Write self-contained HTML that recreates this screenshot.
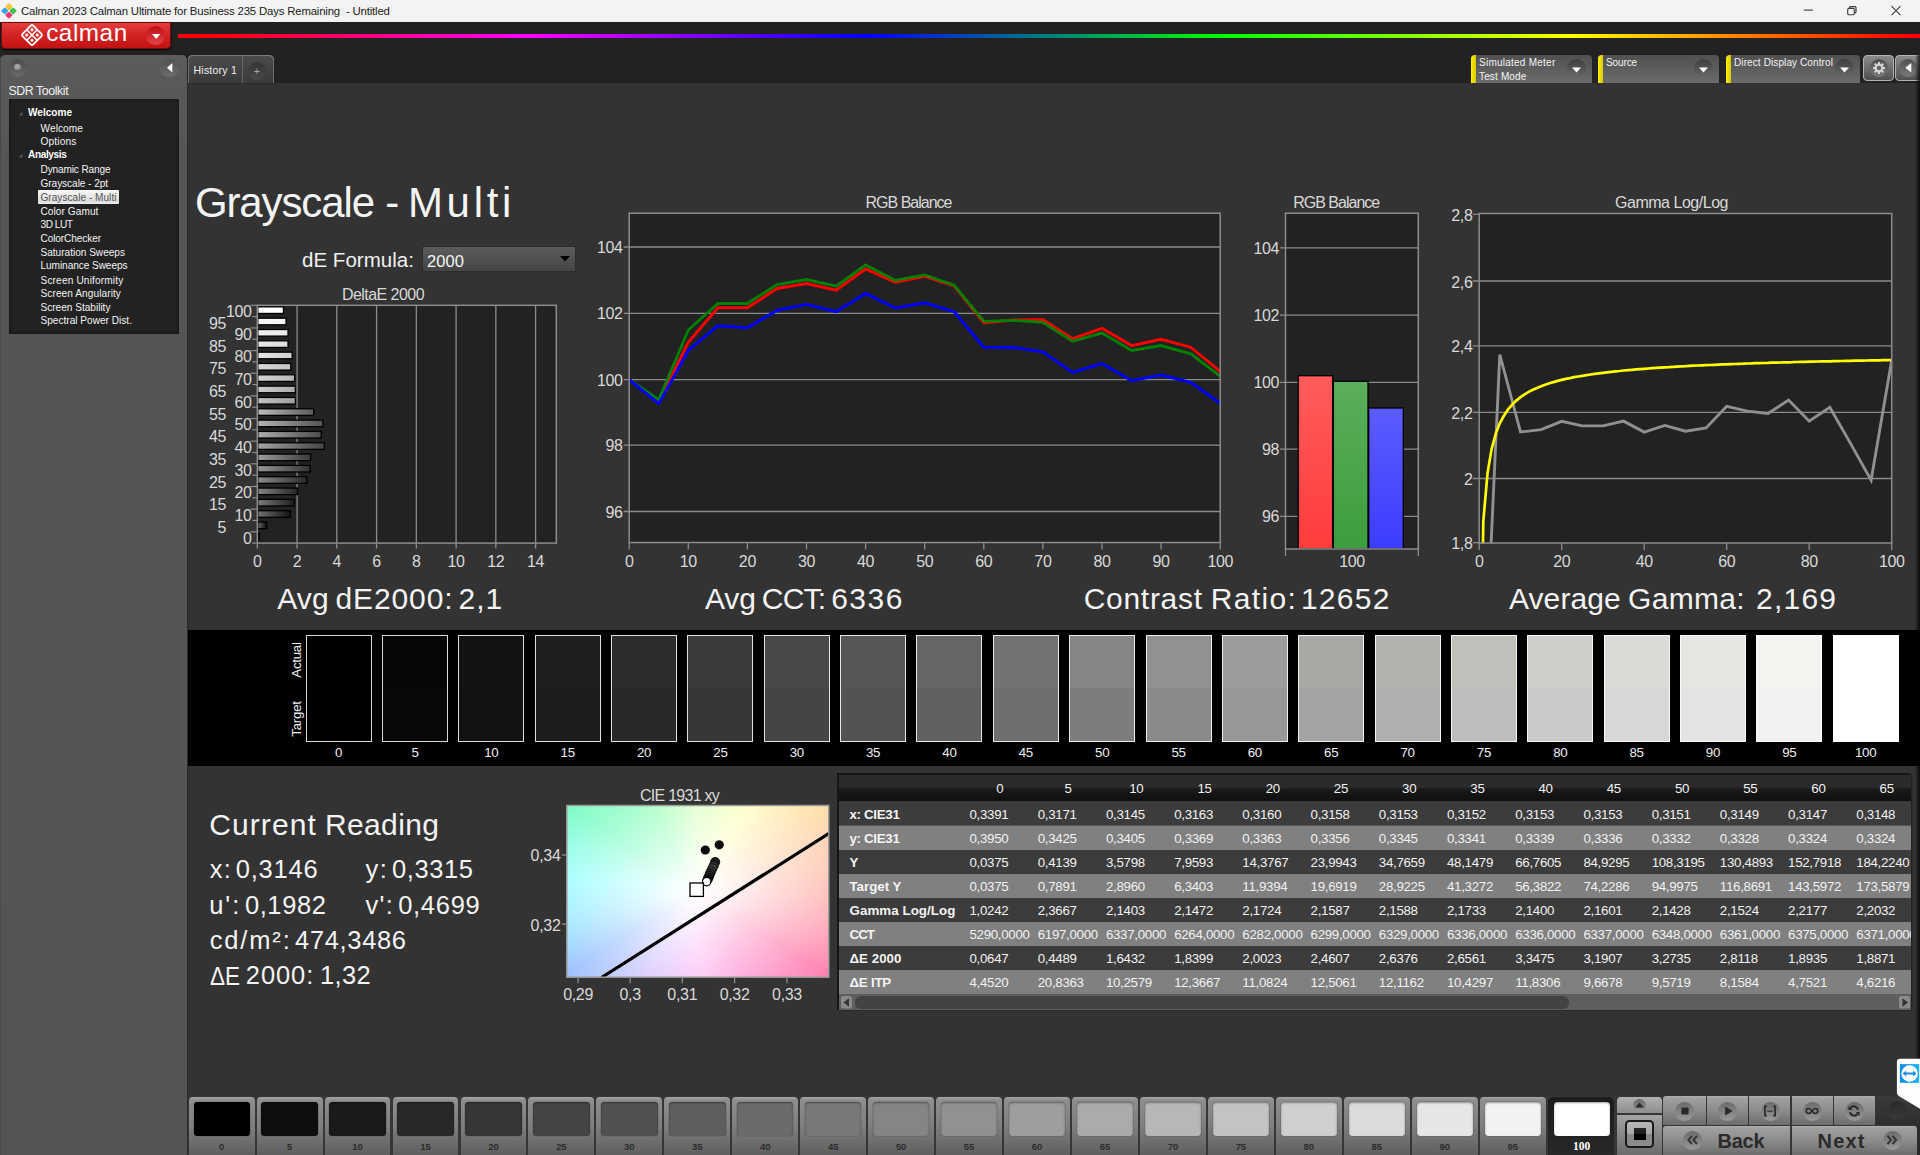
<!DOCTYPE html>
<html lang="en"><head><meta charset="utf-8"><title>Calman 2023 - Grayscale Multi</title>
<style>
html,body{margin:0;padding:0;background:#333;font-family:"Liberation Sans",sans-serif;}
body{width:1920px;height:1155px;position:relative;overflow:hidden;font-family:"Liberation Sans",sans-serif;}
#app{position:absolute;left:0;top:0;width:1920px;height:1155px;overflow:hidden;}
#app div,#app span.t,#app svg.abs,#app table{position:absolute;}
span.t{white-space:pre;display:block;}
svg{display:block;overflow:visible}
</style></head>
<body><div id="app">
<!-- part1 -->
<div id="titlebar" style="left:0;top:0;width:1920px;height:22px;background:#f3f3f3"></div>
<svg class="abs" style="left:1px;top:3px" width="16" height="16" viewBox="0 0 16 16"><rect x="5.2" y="1" width="5.4" height="5.4" rx="1.2" transform="rotate(45 7.9 3.7)" fill="#fbc531"/><rect x="1.1" y="5.2" width="5.4" height="5.4" rx="1.2" transform="rotate(45 3.8 7.9)" fill="#34a4e4"/><rect x="9.4" y="5.2" width="5.4" height="5.4" rx="1.2" transform="rotate(45 12.1 7.9)" fill="#3fc04a"/><rect x="5.2" y="9.4" width="5.4" height="5.4" rx="1.2" transform="rotate(45 7.9 12.1)" fill="#f0356c"/></svg>
<span class="t" style="left:21.00px;top:4.30px;font-size:11.4px;line-height:14px;letter-spacing:-0.184px;color:#1a1a1a;white-space:pre;">Calman 2023 Calman Ultimate for Business 235 Days Remaining  - Untitled</span>
<svg class="abs" style="left:1790px;top:0" width="130" height="22" viewBox="0 0 130 22" fill="none" stroke="#3c3c3c" stroke-width="1.100"><path d="M13.800 10.100h9.200" stroke="#555" stroke-width="1.300"/><rect x="57.700" y="8.400" width="6.600" height="6.300" rx="1.300"/><path d="M59.400 8.300v-0.400a1.300 1.300 0 0 1 1.300-1.300h4a1.300 1.300 0 0 1 1.300 1.300v3.800a1.300 1.300 0 0 1-1.300 1.300h-0.300" stroke-width="1.200"/><path d="M101.500 6.200l9 9m0-9l-9 9" stroke-width="1.100"/></svg>
<div style="left:0;top:22px;width:1920px;height:61px;background:#222"></div>
<div style="left:178px;top:34px;width:1742px;height:4px;background:linear-gradient(90deg,#ff0000 0%,#ff0000 1.500%,#ff00ff 20%,#0000ff 39.500%,#00ff00 60%,#ffff00 80%,#ff0000 99.500%)"></div>
<div style="left:1px;top:22px;width:170px;height:27px;border-radius:0 0 5px 5px;background:linear-gradient(#e84040,#d42424 45%,#c01010);box-shadow:0 0 0 1px #6a1010 inset,0 1px 2px #000"></div>
<svg class="abs" style="left:20px;top:23px" width="24" height="25" viewBox="0 0 24 25"><g transform="translate(12 12.050) rotate(45)" fill="none" stroke="#fff"><rect x="-7.500" y="-7.500" width="15" height="15" rx="1.700" stroke-width="1.800"/><path d="M0 -7.500v15M-7.500 0h15" stroke-width="1.600"/><g fill="#fff" stroke="none"><rect x="-5.100" y="-5.100" width="2.700" height="2.700"/><rect x="2.400" y="-5.100" width="2.700" height="2.700"/><rect x="-5.100" y="2.400" width="2.700" height="2.700"/><rect x="2.400" y="2.400" width="2.700" height="2.700"/></g></g></svg>
<span class="t" style="left:46.20px;top:18.40px;font-size:24.3px;line-height:29px;letter-spacing:0.528px;color:#fff;font-weight:normal;">calman</span>
<div style="left:146.200px;top:25.700px;width:19px;height:19px;border-radius:50%;background:linear-gradient(#bc0c14,#e24646)"></div>
<svg class="abs" style="left:151.500px;top:33.700px" width="9" height="6"><path d="M0 0h8.400l-4.200 4.900z" fill="#fff"/></svg>
<div style="left:0;top:54.800px;width:187px;height:1101px;border-radius:5px 5px 0 0;background:linear-gradient(#5c5c5c 0,#585858 40px,#555 120px,#545454);box-shadow:inset 1px 0 #4a4a4a"></div>
<div style="left:187px;top:83px;width:1.400px;height:1072px;background:#2a2a2a"></div>
<div style="left:8.700px;top:58.800px;width:18px;height:18px;border-radius:50%;background:linear-gradient(#4c4c4c,#686868)"></div>
<div style="left:13.800px;top:63.600px;width:6.800px;height:6.800px;border-radius:50%;background:radial-gradient(circle at 45% 35%,#b0b0b0,#7c7c7c)"></div>
<div style="left:160.300px;top:58.500px;width:18.600px;height:18.600px;border-radius:50%;background:linear-gradient(#525252,#6c6c6c)"></div>
<svg class="abs" style="left:166.600px;top:62.500px" width="6" height="10"><path d="M5.400 0v9.600l-5.400-4.800z" fill="#fff"/></svg>
<span class="t" style="left:8.50px;top:83.70px;font-size:12.3px;line-height:15px;letter-spacing:-0.393px;color:#f2f2f2;">SDR Toolkit</span>
<div style="left:9px;top:99px;width:170px;height:235px;background:#222;box-shadow:inset 0 0 3px 1px #171717"></div>
<svg class="abs" style="left:18px;top:111.2px" width="5" height="5"><path d="M4.500 0.500v4h-4z" fill="#555"/></svg>
<span class="t" style="left:28.00px;top:107.20px;font-size:10.1px;line-height:12px;letter-spacing:-0.022px;font-weight:bold;color:#fff;">Welcome</span>
<span class="t" style="left:40.50px;top:122.80px;font-size:10.1px;line-height:12px;letter-spacing:0.085px;color:#f4f4f4;">Welcome</span>
<span class="t" style="left:40.50px;top:135.60px;font-size:10.1px;line-height:12px;letter-spacing:0.171px;color:#f4f4f4;">Options</span>
<svg class="abs" style="left:18px;top:153.4px" width="5" height="5"><path d="M4.500 0.500v4h-4z" fill="#555"/></svg>
<span class="t" style="left:28.00px;top:149.40px;font-size:10.1px;line-height:12px;letter-spacing:-0.380px;font-weight:bold;color:#fff;">Analysis</span>
<span class="t" style="left:40.50px;top:164.30px;font-size:10.1px;line-height:12px;letter-spacing:-0.142px;color:#f4f4f4;">Dynamic Range</span>
<span class="t" style="left:40.50px;top:178.30px;font-size:10.1px;line-height:12px;letter-spacing:-0.065px;color:#f4f4f4;">Grayscale - 2pt</span>
<div style="left:38.100px;top:190.3px;width:80.700px;height:13.700px;border-radius:1px;background:linear-gradient(#fff 0,#f2f2f2 18%,#dcdcdc 80%,#efefef 100%)"></div>
<span class="t" style="left:40.50px;top:191.80px;font-size:10.1px;line-height:12px;letter-spacing:0.014px;color:#555;">Grayscale - Multi</span>
<span class="t" style="left:40.50px;top:205.50px;font-size:10.1px;line-height:12px;letter-spacing:0.068px;color:#f4f4f4;">Color Gamut</span>
<span class="t" style="left:40.50px;top:219.30px;font-size:10.1px;line-height:12px;letter-spacing:-0.466px;color:#f4f4f4;">3D LUT</span>
<span class="t" style="left:40.50px;top:233.00px;font-size:10.1px;line-height:12px;letter-spacing:-0.103px;color:#f4f4f4;">ColorChecker</span>
<span class="t" style="left:40.50px;top:246.60px;font-size:10.1px;line-height:12px;letter-spacing:-0.016px;color:#f4f4f4;">Saturation Sweeps</span>
<span class="t" style="left:40.50px;top:260.30px;font-size:10.1px;line-height:12px;letter-spacing:-0.071px;color:#f4f4f4;">Luminance Sweeps</span>
<span class="t" style="left:40.50px;top:274.80px;font-size:10.1px;line-height:12px;letter-spacing:0.161px;color:#f4f4f4;">Screen Uniformity</span>
<span class="t" style="left:40.50px;top:288.30px;font-size:10.1px;line-height:12px;letter-spacing:0.079px;color:#f4f4f4;">Screen Angularity</span>
<span class="t" style="left:40.50px;top:301.50px;font-size:10.1px;line-height:12px;letter-spacing:-0.011px;color:#f4f4f4;">Screen Stability</span>
<span class="t" style="left:40.50px;top:315.30px;font-size:10.1px;line-height:12px;color:#f4f4f4;">Spectral Power Dist.</span>
<div style="left:187.500px;top:54.500px;width:86.500px;height:28.500px;border-radius:5px 5px 0 0;background:linear-gradient(#4c4c4c,#3a3a3a);box-shadow:inset 0 1px 0 0 #7a7a7a,inset 1px 0 0 0 #6c6c6c,inset -1px 0 0 0 #6c6c6c"></div>
<div style="left:241.800px;top:55.500px;width:1.200px;height:27px;background:#666"></div>
<span class="t" style="left:193.50px;top:64.00px;font-size:10.5px;line-height:13px;letter-spacing:0.231px;color:#f0f0f0;">History 1</span>
<div style="left:247.700px;top:61.600px;width:18px;height:18px;border-radius:50%;background:linear-gradient(#343434,#4a4a4a)"></div>
<span class="t" style="left:253.73px;top:65.30px;font-size:10.5px;line-height:13px;color:#a8a8a8;">+</span>
<div style="left:188px;top:83px;width:1732px;height:1072px;background:#333"></div>
<div style="left:187.500px;top:82.700px;width:86.500px;height:1.100px;background:#2b2b2b"></div>
<div style="left:1471px;top:55px;width:121px;height:28px;border-radius:4px 4px 0 0;background:linear-gradient(#505050,#6c6c6c)"></div>
<div style="left:1471px;top:55px;width:5px;height:28px;border-radius:4px 0 0 0;background:linear-gradient(90deg,#fff000,#d8c800)"></div>
<div style="left:1567px;top:59px;width:19px;height:19px;border-radius:50%;background:linear-gradient(#3e3e3e,#6a6a6a)"></div>
<svg class="abs" style="left:1572px;top:67px" width="9" height="6"><path d="M0 0.500h9l-4.500 5z" fill="#fff"/></svg>
<span class="t" style="left:1479.00px;top:56.70px;font-size:10px;line-height:12px;letter-spacing:0.246px;color:#f4f4f4;">Simulated Meter</span>
<span class="t" style="left:1479.00px;top:71.00px;font-size:10px;line-height:12px;letter-spacing:0.152px;color:#f4f4f4;">Test Mode</span>
<div style="left:1598px;top:55px;width:121px;height:28px;border-radius:4px 4px 0 0;background:linear-gradient(#505050,#6c6c6c)"></div>
<div style="left:1598px;top:55px;width:5px;height:28px;border-radius:4px 0 0 0;background:linear-gradient(90deg,#fff000,#d8c800)"></div>
<div style="left:1694px;top:59px;width:19px;height:19px;border-radius:50%;background:linear-gradient(#3e3e3e,#6a6a6a)"></div>
<svg class="abs" style="left:1699px;top:67px" width="9" height="6"><path d="M0 0.500h9l-4.500 5z" fill="#fff"/></svg>
<span class="t" style="left:1606.00px;top:56.70px;font-size:10px;line-height:12px;letter-spacing:-0.114px;color:#f4f4f4;">Source</span>
<div style="left:1726px;top:55px;width:134px;height:28px;border-radius:4px 4px 0 0;background:linear-gradient(#505050,#6c6c6c)"></div>
<div style="left:1726px;top:55px;width:5px;height:28px;border-radius:4px 0 0 0;background:linear-gradient(90deg,#fff000,#d8c800)"></div>
<div style="left:1835px;top:59px;width:19px;height:19px;border-radius:50%;background:linear-gradient(#3e3e3e,#6a6a6a)"></div>
<svg class="abs" style="left:1840px;top:67px" width="9" height="6"><path d="M0 0.500h9l-4.500 5z" fill="#fff"/></svg>
<span class="t" style="left:1734.00px;top:56.70px;font-size:10px;line-height:12px;letter-spacing:0.105px;color:#f4f4f4;">Direct Display Control</span>
<div style="left:1863px;top:54.500px;width:31.300px;height:26.400px;box-sizing:border-box;border:1px solid #b4b4b4;border-radius:4px;background:linear-gradient(#8a8a8a,#505050)"></div>
<div style="left:1869.600px;top:58.600px;width:18px;height:18px;border-radius:50%;background:linear-gradient(#505050,#7a7a7a)"></div>
<svg class="abs" style="left:1871.600px;top:60.600px" width="14" height="14" viewBox="-7 -7 14 14"><g fill="#d8d8d8"><path d="M-1.250 -4h2.500l-0.350 -2h-1.800z" transform="rotate(0)"/><path d="M-1.250 -4h2.500l-0.350 -2h-1.800z" transform="rotate(45)"/><path d="M-1.250 -4h2.500l-0.350 -2h-1.800z" transform="rotate(90)"/><path d="M-1.250 -4h2.500l-0.350 -2h-1.800z" transform="rotate(135)"/><path d="M-1.250 -4h2.500l-0.350 -2h-1.800z" transform="rotate(180)"/><path d="M-1.250 -4h2.500l-0.350 -2h-1.800z" transform="rotate(225)"/><path d="M-1.250 -4h2.500l-0.350 -2h-1.800z" transform="rotate(270)"/><path d="M-1.250 -4h2.500l-0.350 -2h-1.800z" transform="rotate(315)"/></g><circle r="3.300" fill="none" stroke="#d8d8d8" stroke-width="1.900"/></svg>
<div style="left:1894.900px;top:54.500px;width:31.300px;height:26.400px;box-sizing:border-box;border:1px solid #b4b4b4;border-radius:4px;background:linear-gradient(#8a8a8a,#505050)"></div>
<div style="left:1898.600px;top:58.600px;width:18px;height:18px;border-radius:50%;background:linear-gradient(#505050,#7a7a7a)"></div>
<svg class="abs" style="left:1904.500px;top:62.500px" width="7" height="10"><path d="M6.300 0v9.600l-6-4.800z" fill="#fff"/></svg>
<div style="left:1914.500px;top:55px;width:5.500px;height:1042px;background:linear-gradient(90deg,rgba(0,0,0,0),rgba(0,0,0,.45) 55%,rgba(0,0,0,.75))"></div>
<!-- part2 -->
<span class="t" style="left:194.90px;top:178.00px;font-size:42px;line-height:50px;letter-spacing:-1.115px;color:#f4f4f4;">Grayscale</span><span class="t" style="left:385.22px;top:178.00px;font-size:42px;line-height:50px;color:#f4f4f4;">-</span><span class="t" style="left:407.94px;top:178.00px;font-size:42px;line-height:50px;letter-spacing:3.690px;color:#f4f4f4;">Multi</span>
<span class="t" style="left:302.00px;top:246.50px;font-size:20.5px;line-height:25px;letter-spacing:0.033px;color:#f0f0f0;">dE Formula:</span>
<div style="left:422.400px;top:245.600px;width:153.600px;height:26px;background:linear-gradient(#5c5c5c,#444);box-shadow:inset 0 0 0 1px #2c2c2c"></div>
<span class="t" style="left:427.00px;top:251.00px;font-size:16.5px;line-height:20px;letter-spacing:0.074px;color:#f4f4f4;">2000</span>
<svg class="abs" style="left:560px;top:256px" width="10" height="6"><path d="M0 0h10l-5 5.500z" fill="#000"/></svg>
<span class="t" style="left:342.00px;top:285.00px;font-size:16px;line-height:19px;letter-spacing:-0.551px;color:#d9d9d9;">DeltaE 2000</span>
<svg class="abs" style="left:190px;top:285px" width="390" height="290" viewBox="190 285 390 290">
<defs>
<linearGradient id="db0" x1="0" x2="1" y1="0" y2="0"><stop offset="0" stop-color="rgb(97,97,97)"/><stop offset="1" stop-color="rgb(0,0,0)"/></linearGradient>
<linearGradient id="db1" x1="0" x2="1" y1="0" y2="0"><stop offset="0" stop-color="rgb(107,107,107)"/><stop offset="1" stop-color="rgb(10,10,10)"/></linearGradient>
<linearGradient id="db2" x1="0" x2="1" y1="0" y2="0"><stop offset="0" stop-color="rgb(116,116,116)"/><stop offset="1" stop-color="rgb(19,19,19)"/></linearGradient>
<linearGradient id="db3" x1="0" x2="1" y1="0" y2="0"><stop offset="0" stop-color="rgb(125,125,125)"/><stop offset="1" stop-color="rgb(28,28,28)"/></linearGradient>
<linearGradient id="db4" x1="0" x2="1" y1="0" y2="0"><stop offset="0" stop-color="rgb(133,133,133)"/><stop offset="1" stop-color="rgb(36,36,36)"/></linearGradient>
<linearGradient id="db5" x1="0" x2="1" y1="0" y2="0"><stop offset="0" stop-color="rgb(141,141,141)"/><stop offset="1" stop-color="rgb(44,44,44)"/></linearGradient>
<linearGradient id="db6" x1="0" x2="1" y1="0" y2="0"><stop offset="0" stop-color="rgb(149,149,149)"/><stop offset="1" stop-color="rgb(52,52,52)"/></linearGradient>
<linearGradient id="db7" x1="0" x2="1" y1="0" y2="0"><stop offset="0" stop-color="rgb(157,157,157)"/><stop offset="1" stop-color="rgb(60,60,60)"/></linearGradient>
<linearGradient id="db8" x1="0" x2="1" y1="0" y2="0"><stop offset="0" stop-color="rgb(165,165,165)"/><stop offset="1" stop-color="rgb(68,68,68)"/></linearGradient>
<linearGradient id="db9" x1="0" x2="1" y1="0" y2="0"><stop offset="0" stop-color="rgb(173,173,173)"/><stop offset="1" stop-color="rgb(76,76,76)"/></linearGradient>
<linearGradient id="db10" x1="0" x2="1" y1="0" y2="0"><stop offset="0" stop-color="rgb(181,181,181)"/><stop offset="1" stop-color="rgb(84,84,84)"/></linearGradient>
<linearGradient id="db11" x1="0" x2="1" y1="0" y2="0"><stop offset="0" stop-color="rgb(188,188,188)"/><stop offset="1" stop-color="rgb(91,91,91)"/></linearGradient>
<linearGradient id="db12" x1="0" x2="1" y1="0" y2="0"><stop offset="0" stop-color="rgb(195,195,195)"/><stop offset="1" stop-color="rgb(159,159,159)"/></linearGradient>
<linearGradient id="db13" x1="0" x2="1" y1="0" y2="0"><stop offset="0" stop-color="rgb(204,204,204)"/><stop offset="1" stop-color="rgb(172,172,172)"/></linearGradient>
<linearGradient id="db14" x1="0" x2="1" y1="0" y2="0"><stop offset="0" stop-color="rgb(211,211,211)"/><stop offset="1" stop-color="rgb(184,184,184)"/></linearGradient>
<linearGradient id="db15" x1="0" x2="1" y1="0" y2="0"><stop offset="0" stop-color="rgb(218,218,218)"/><stop offset="1" stop-color="rgb(196,196,196)"/></linearGradient>
<linearGradient id="db16" x1="0" x2="1" y1="0" y2="0"><stop offset="0" stop-color="rgb(226,226,226)"/><stop offset="1" stop-color="rgb(208,208,208)"/></linearGradient>
<linearGradient id="db17" x1="0" x2="1" y1="0" y2="0"><stop offset="0" stop-color="rgb(233,233,233)"/><stop offset="1" stop-color="rgb(220,220,220)"/></linearGradient>
<linearGradient id="db18" x1="0" x2="1" y1="0" y2="0"><stop offset="0" stop-color="rgb(240,240,240)"/><stop offset="1" stop-color="rgb(231,231,231)"/></linearGradient>
<linearGradient id="db19" x1="0" x2="1" y1="0" y2="0"><stop offset="0" stop-color="rgb(248,248,248)"/><stop offset="1" stop-color="rgb(243,243,243)"/></linearGradient>
<linearGradient id="db20" x1="0" x2="1" y1="0" y2="0"><stop offset="0" stop-color="rgb(255,255,255)"/><stop offset="1" stop-color="rgb(255,255,255)"/></linearGradient>
</defs>
<rect x="257.3" y="305.3" width="299.0" height="237.8" fill="#222"/>
<path d="M297.06 305.3V543.1" stroke="#8c8c8c" stroke-width="1.300"/>
<path d="M336.81 305.3V543.1" stroke="#8c8c8c" stroke-width="1.300"/>
<path d="M376.57 305.3V543.1" stroke="#8c8c8c" stroke-width="1.300"/>
<path d="M416.33 305.3V543.1" stroke="#8c8c8c" stroke-width="1.300"/>
<path d="M456.09 305.3V543.1" stroke="#8c8c8c" stroke-width="1.300"/>
<path d="M495.84 305.3V543.1" stroke="#8c8c8c" stroke-width="1.300"/>
<path d="M535.60 305.3V543.1" stroke="#8c8c8c" stroke-width="1.300"/>
<rect x="257.80" y="306.86" width="25.64" height="6.600" fill="url(#db20)" stroke="#000" stroke-width="1.300"/>
<rect x="257.80" y="318.19" width="28.23" height="6.600" fill="url(#db19)" stroke="#000" stroke-width="1.300"/>
<rect x="257.80" y="329.51" width="30.22" height="6.600" fill="url(#db18)" stroke="#000" stroke-width="1.300"/>
<rect x="257.80" y="340.83" width="30.22" height="6.600" fill="url(#db17)" stroke="#000" stroke-width="1.300"/>
<rect x="257.80" y="352.16" width="34.39" height="6.600" fill="url(#db16)" stroke="#000" stroke-width="1.300"/>
<rect x="257.80" y="363.48" width="33.00" height="6.600" fill="url(#db15)" stroke="#000" stroke-width="1.300"/>
<rect x="257.80" y="374.80" width="36.78" height="6.600" fill="url(#db14)" stroke="#000" stroke-width="1.300"/>
<rect x="257.80" y="386.13" width="37.51" height="6.600" fill="url(#db13)" stroke="#000" stroke-width="1.300"/>
<rect x="257.80" y="397.45" width="37.64" height="6.600" fill="url(#db12)" stroke="#000" stroke-width="1.300"/>
<rect x="257.80" y="408.78" width="55.89" height="6.600" fill="url(#db11)" stroke="#000" stroke-width="1.300"/>
<rect x="257.80" y="420.10" width="65.07" height="6.600" fill="url(#db10)" stroke="#000" stroke-width="1.300"/>
<rect x="257.80" y="431.42" width="63.43" height="6.600" fill="url(#db9)" stroke="#000" stroke-width="1.300"/>
<rect x="257.80" y="442.75" width="66.54" height="6.600" fill="url(#db8)" stroke="#000" stroke-width="1.300"/>
<rect x="257.80" y="454.07" width="52.80" height="6.600" fill="url(#db7)" stroke="#000" stroke-width="1.300"/>
<rect x="257.80" y="465.40" width="52.43" height="6.600" fill="url(#db6)" stroke="#000" stroke-width="1.300"/>
<rect x="257.80" y="476.72" width="48.92" height="6.600" fill="url(#db5)" stroke="#000" stroke-width="1.300"/>
<rect x="257.80" y="488.04" width="39.80" height="6.600" fill="url(#db4)" stroke="#000" stroke-width="1.300"/>
<rect x="257.80" y="499.37" width="36.57" height="6.600" fill="url(#db3)" stroke="#000" stroke-width="1.300"/>
<rect x="257.80" y="510.69" width="32.66" height="6.600" fill="url(#db2)" stroke="#000" stroke-width="1.300"/>
<rect x="257.80" y="522.01" width="8.92" height="6.600" fill="url(#db1)" stroke="#000" stroke-width="1.300"/>
<rect x="257.80" y="533.34" width="1.50" height="6.600" fill="url(#db0)" stroke="#000" stroke-width="1.300"/>
<path d="M250.3 305.30h7.0" stroke="#8c8c8c" stroke-width="1.200"/>
<path d="M252.3 316.62h5.0" stroke="#8c8c8c" stroke-width="1.200"/>
<path d="M250.3 327.95h7.0" stroke="#8c8c8c" stroke-width="1.200"/>
<path d="M252.3 339.27h5.0" stroke="#8c8c8c" stroke-width="1.200"/>
<path d="M250.3 350.60h7.0" stroke="#8c8c8c" stroke-width="1.200"/>
<path d="M252.3 361.92h5.0" stroke="#8c8c8c" stroke-width="1.200"/>
<path d="M250.3 373.24h7.0" stroke="#8c8c8c" stroke-width="1.200"/>
<path d="M252.3 384.57h5.0" stroke="#8c8c8c" stroke-width="1.200"/>
<path d="M250.3 395.89h7.0" stroke="#8c8c8c" stroke-width="1.200"/>
<path d="M252.3 407.21h5.0" stroke="#8c8c8c" stroke-width="1.200"/>
<path d="M250.3 418.54h7.0" stroke="#8c8c8c" stroke-width="1.200"/>
<path d="M252.3 429.86h5.0" stroke="#8c8c8c" stroke-width="1.200"/>
<path d="M250.3 441.19h7.0" stroke="#8c8c8c" stroke-width="1.200"/>
<path d="M252.3 452.51h5.0" stroke="#8c8c8c" stroke-width="1.200"/>
<path d="M250.3 463.83h7.0" stroke="#8c8c8c" stroke-width="1.200"/>
<path d="M252.3 475.16h5.0" stroke="#8c8c8c" stroke-width="1.200"/>
<path d="M250.3 486.48h7.0" stroke="#8c8c8c" stroke-width="1.200"/>
<path d="M252.3 497.80h5.0" stroke="#8c8c8c" stroke-width="1.200"/>
<path d="M250.3 509.13h7.0" stroke="#8c8c8c" stroke-width="1.200"/>
<path d="M252.3 520.45h5.0" stroke="#8c8c8c" stroke-width="1.200"/>
<path d="M250.3 531.78h7.0" stroke="#8c8c8c" stroke-width="1.200"/>
<path d="M252.3 543.10h5.0" stroke="#8c8c8c" stroke-width="1.200"/>
<rect x="257.3" y="305.3" width="299.0" height="237.8" fill="none" stroke="#8c8c8c" stroke-width="1.500"/>
<path d="M257.30 543.1v5.500" stroke="#8c8c8c" stroke-width="1.300"/>
<path d="M297.06 543.1v5.500" stroke="#8c8c8c" stroke-width="1.300"/>
<path d="M336.81 543.1v5.500" stroke="#8c8c8c" stroke-width="1.300"/>
<path d="M376.57 543.1v5.500" stroke="#8c8c8c" stroke-width="1.300"/>
<path d="M416.33 543.1v5.500" stroke="#8c8c8c" stroke-width="1.300"/>
<path d="M456.09 543.1v5.500" stroke="#8c8c8c" stroke-width="1.300"/>
<path d="M495.84 543.1v5.500" stroke="#8c8c8c" stroke-width="1.300"/>
<path d="M535.60 543.1v5.500" stroke="#8c8c8c" stroke-width="1.300"/>
</svg>
<span class="t" style="left:225.88px;top:302.06px;font-size:16px;line-height:19px;letter-spacing:-0.356px;color:#d9d9d9;">100</span>
<span class="t" style="left:208.92px;top:313.99px;font-size:16px;line-height:19px;letter-spacing:-0.356px;color:#d9d9d9;">95</span>
<span class="t" style="left:234.42px;top:324.71px;font-size:16px;line-height:19px;letter-spacing:-0.356px;color:#d9d9d9;">90</span>
<span class="t" style="left:208.92px;top:336.63px;font-size:16px;line-height:19px;letter-spacing:-0.356px;color:#d9d9d9;">85</span>
<span class="t" style="left:234.42px;top:347.36px;font-size:16px;line-height:19px;letter-spacing:-0.356px;color:#d9d9d9;">80</span>
<span class="t" style="left:208.92px;top:359.28px;font-size:16px;line-height:19px;letter-spacing:-0.356px;color:#d9d9d9;">75</span>
<span class="t" style="left:234.42px;top:370.00px;font-size:16px;line-height:19px;letter-spacing:-0.356px;color:#d9d9d9;">70</span>
<span class="t" style="left:208.92px;top:381.93px;font-size:16px;line-height:19px;letter-spacing:-0.356px;color:#d9d9d9;">65</span>
<span class="t" style="left:234.42px;top:392.65px;font-size:16px;line-height:19px;letter-spacing:-0.356px;color:#d9d9d9;">60</span>
<span class="t" style="left:208.92px;top:404.58px;font-size:16px;line-height:19px;letter-spacing:-0.356px;color:#d9d9d9;">55</span>
<span class="t" style="left:234.42px;top:415.30px;font-size:16px;line-height:19px;letter-spacing:-0.356px;color:#d9d9d9;">50</span>
<span class="t" style="left:208.92px;top:427.22px;font-size:16px;line-height:19px;letter-spacing:-0.356px;color:#d9d9d9;">45</span>
<span class="t" style="left:234.42px;top:437.95px;font-size:16px;line-height:19px;letter-spacing:-0.356px;color:#d9d9d9;">40</span>
<span class="t" style="left:208.92px;top:449.87px;font-size:16px;line-height:19px;letter-spacing:-0.356px;color:#d9d9d9;">35</span>
<span class="t" style="left:234.42px;top:460.60px;font-size:16px;line-height:19px;letter-spacing:-0.356px;color:#d9d9d9;">30</span>
<span class="t" style="left:208.92px;top:472.52px;font-size:16px;line-height:19px;letter-spacing:-0.356px;color:#d9d9d9;">25</span>
<span class="t" style="left:234.42px;top:483.24px;font-size:16px;line-height:19px;letter-spacing:-0.356px;color:#d9d9d9;">20</span>
<span class="t" style="left:208.92px;top:495.17px;font-size:16px;line-height:19px;letter-spacing:-0.356px;color:#d9d9d9;">15</span>
<span class="t" style="left:234.42px;top:505.89px;font-size:16px;line-height:19px;letter-spacing:-0.356px;color:#d9d9d9;">10</span>
<span class="t" style="left:217.46px;top:517.81px;font-size:16px;line-height:19px;letter-spacing:-0.356px;color:#d9d9d9;">5</span>
<span class="t" style="left:242.96px;top:528.54px;font-size:16px;line-height:19px;letter-spacing:-0.356px;color:#d9d9d9;">0</span>
<span class="t" style="left:253.03px;top:551.50px;font-size:16px;line-height:19px;letter-spacing:-0.356px;color:#d9d9d9;">0</span>
<span class="t" style="left:292.79px;top:551.50px;font-size:16px;line-height:19px;letter-spacing:-0.356px;color:#d9d9d9;">2</span>
<span class="t" style="left:332.54px;top:551.50px;font-size:16px;line-height:19px;letter-spacing:-0.356px;color:#d9d9d9;">4</span>
<span class="t" style="left:372.30px;top:551.50px;font-size:16px;line-height:19px;letter-spacing:-0.356px;color:#d9d9d9;">6</span>
<span class="t" style="left:412.06px;top:551.50px;font-size:16px;line-height:19px;letter-spacing:-0.356px;color:#d9d9d9;">8</span>
<span class="t" style="left:447.54px;top:551.50px;font-size:16px;line-height:19px;letter-spacing:-0.356px;color:#d9d9d9;">10</span>
<span class="t" style="left:487.30px;top:551.50px;font-size:16px;line-height:19px;letter-spacing:-0.356px;color:#d9d9d9;">12</span>
<span class="t" style="left:527.06px;top:551.50px;font-size:16px;line-height:19px;letter-spacing:-0.356px;color:#d9d9d9;">14</span>
<span class="t" style="left:277.30px;top:580.50px;font-size:30px;line-height:36px;letter-spacing:0.100px;color:#f4f4f4;">Avg</span><span class="t" style="left:335.50px;top:580.50px;font-size:30px;line-height:36px;letter-spacing:0.883px;color:#f4f4f4;">dE2000:</span><span class="t" style="left:458.50px;top:580.50px;font-size:30px;line-height:36px;letter-spacing:1.000px;color:#f4f4f4;">2,1</span>
<span class="t" style="left:865.50px;top:192.50px;font-size:16px;line-height:19px;letter-spacing:-0.994px;color:#d9d9d9;">RGB Balance</span>
<svg class="abs" style="left:585px;top:195px" width="660" height="360" viewBox="585 195 660 360">
<rect x="629.2" y="213.2" width="591.0" height="329.3" fill="#222"/>
<path d="M623.7 247.00H1220.2" stroke="#8c8c8c" stroke-width="1.300"/>
<path d="M623.7 313.30H1220.2" stroke="#8c8c8c" stroke-width="1.300"/>
<path d="M623.7 379.70H1220.2" stroke="#8c8c8c" stroke-width="1.300"/>
<path d="M623.7 445.10H1220.2" stroke="#8c8c8c" stroke-width="1.300"/>
<path d="M623.7 511.50H1220.2" stroke="#8c8c8c" stroke-width="1.300"/>
<clipPath id="c1"><rect x="629.2" y="213.2" width="591.0" height="329.3"/></clipPath><g clip-path="url(#c1)" fill="none" stroke-width="2.900" stroke-linejoin="miter">
<polyline stroke="#ff0000" points="629.2,379.7 658.8,402.2 688.3,342.2 717.9,307.8 747.4,307.8 777.0,288.5 806.5,283.6 836.1,290.2 865.6,269.0 895.2,282.2 924.7,276.3 954.2,285.9 983.8,322.7 1013.4,320.0 1042.9,319.7 1072.5,338.6 1102.0,328.3 1131.6,345.6 1161.1,339.3 1190.7,347.2 1220.2,371.4"/>
<polyline stroke="#008000" points="629.2,379.7 658.8,399.6 688.3,330.0 717.9,303.5 747.4,303.5 777.0,284.6 806.5,279.6 836.1,286.2 865.6,265.0 895.2,280.2 924.7,274.9 954.2,285.2 983.8,321.4 1013.4,320.4 1042.9,322.4 1072.5,341.2 1102.0,333.0 1131.6,350.5 1161.1,345.6 1190.7,353.8 1220.2,376.1"/>
<polyline stroke="#0000ff" points="629.2,379.7 658.8,403.6 688.3,350.5 717.9,325.7 747.4,327.7 777.0,310.4 806.5,304.4 836.1,311.7 865.6,293.5 895.2,308.1 924.7,302.8 954.2,311.7 983.8,347.2 1013.4,347.5 1042.9,351.9 1072.5,372.4 1102.0,363.5 1131.6,380.7 1161.1,375.1 1190.7,382.4 1220.2,403.2"/>
</g>
<rect x="629.2" y="213.2" width="591.0" height="329.3" fill="none" stroke="#8c8c8c" stroke-width="1.500"/>
<path d="M629.20 542.5v7" stroke="#8c8c8c" stroke-width="1.300"/>
<path d="M688.30 542.5v7" stroke="#8c8c8c" stroke-width="1.300"/>
<path d="M747.40 542.5v7" stroke="#8c8c8c" stroke-width="1.300"/>
<path d="M806.50 542.5v7" stroke="#8c8c8c" stroke-width="1.300"/>
<path d="M865.60 542.5v7" stroke="#8c8c8c" stroke-width="1.300"/>
<path d="M924.70 542.5v7" stroke="#8c8c8c" stroke-width="1.300"/>
<path d="M983.80 542.5v7" stroke="#8c8c8c" stroke-width="1.300"/>
<path d="M1042.90 542.5v7" stroke="#8c8c8c" stroke-width="1.300"/>
<path d="M1102.00 542.5v7" stroke="#8c8c8c" stroke-width="1.300"/>
<path d="M1161.10 542.5v7" stroke="#8c8c8c" stroke-width="1.300"/>
<path d="M1220.20 542.5v7" stroke="#8c8c8c" stroke-width="1.300"/>
</svg>
<span class="t" style="left:596.88px;top:238.00px;font-size:16px;line-height:19px;letter-spacing:-0.356px;color:#d9d9d9;">104</span>
<span class="t" style="left:596.88px;top:304.30px;font-size:16px;line-height:19px;letter-spacing:-0.356px;color:#d9d9d9;">102</span>
<span class="t" style="left:596.88px;top:370.70px;font-size:16px;line-height:19px;letter-spacing:-0.356px;color:#d9d9d9;">100</span>
<span class="t" style="left:605.42px;top:436.10px;font-size:16px;line-height:19px;letter-spacing:-0.356px;color:#d9d9d9;">98</span>
<span class="t" style="left:605.42px;top:502.50px;font-size:16px;line-height:19px;letter-spacing:-0.356px;color:#d9d9d9;">96</span>
<span class="t" style="left:624.93px;top:551.50px;font-size:16px;line-height:19px;letter-spacing:-0.356px;color:#d9d9d9;">0</span>
<span class="t" style="left:679.76px;top:551.50px;font-size:16px;line-height:19px;letter-spacing:-0.356px;color:#d9d9d9;">10</span>
<span class="t" style="left:738.86px;top:551.50px;font-size:16px;line-height:19px;letter-spacing:-0.356px;color:#d9d9d9;">20</span>
<span class="t" style="left:797.96px;top:551.50px;font-size:16px;line-height:19px;letter-spacing:-0.356px;color:#d9d9d9;">30</span>
<span class="t" style="left:857.06px;top:551.50px;font-size:16px;line-height:19px;letter-spacing:-0.356px;color:#d9d9d9;">40</span>
<span class="t" style="left:916.16px;top:551.50px;font-size:16px;line-height:19px;letter-spacing:-0.356px;color:#d9d9d9;">50</span>
<span class="t" style="left:975.26px;top:551.50px;font-size:16px;line-height:19px;letter-spacing:-0.356px;color:#d9d9d9;">60</span>
<span class="t" style="left:1034.36px;top:551.50px;font-size:16px;line-height:19px;letter-spacing:-0.356px;color:#d9d9d9;">70</span>
<span class="t" style="left:1093.46px;top:551.50px;font-size:16px;line-height:19px;letter-spacing:-0.356px;color:#d9d9d9;">80</span>
<span class="t" style="left:1152.56px;top:551.50px;font-size:16px;line-height:19px;letter-spacing:-0.356px;color:#d9d9d9;">90</span>
<span class="t" style="left:1207.39px;top:551.50px;font-size:16px;line-height:19px;letter-spacing:-0.356px;color:#d9d9d9;">100</span>
<span class="t" style="left:705.00px;top:580.50px;font-size:30px;line-height:36px;letter-spacing:-0.100px;color:#f4f4f4;">Avg</span><span class="t" style="left:761.80px;top:580.50px;font-size:30px;line-height:36px;letter-spacing:-0.800px;color:#f4f4f4;">CCT:</span><span class="t" style="left:831.20px;top:580.50px;font-size:30px;line-height:36px;letter-spacing:1.467px;color:#f4f4f4;">6336</span>
<span class="t" style="left:1293.20px;top:192.50px;font-size:16px;line-height:19px;letter-spacing:-0.994px;color:#d9d9d9;">RGB Balance</span>
<svg class="abs" style="left:1245px;top:195px" width="190" height="370" viewBox="1245 195 190 370">
<defs><linearGradient id="gr" x1="0" x2="0" y1="0" y2="1"><stop offset="0" stop-color="#ff5c5c"/><stop offset="1" stop-color="#ff3c3c"/></linearGradient><linearGradient id="gg" x1="0" x2="0" y1="0" y2="1"><stop offset="0" stop-color="#5cae5c"/><stop offset="1" stop-color="#3c9e3c"/></linearGradient><linearGradient id="gb" x1="0" x2="0" y1="0" y2="1"><stop offset="0" stop-color="#5c5cff"/><stop offset="1" stop-color="#3c3cff"/></linearGradient></defs>
<rect x="1285.5" y="213.2" width="132.8" height="335.8" fill="#222"/>
<path d="M1280.0 247.90H1418.3" stroke="#8c8c8c" stroke-width="1.300"/>
<path d="M1280.0 315.10H1418.3" stroke="#8c8c8c" stroke-width="1.300"/>
<path d="M1280.0 382.30H1418.3" stroke="#8c8c8c" stroke-width="1.300"/>
<path d="M1280.0 449.20H1418.3" stroke="#8c8c8c" stroke-width="1.300"/>
<path d="M1280.0 516.30H1418.3" stroke="#8c8c8c" stroke-width="1.300"/>
<rect x="1298.2" y="375.7" width="34.5" height="173.3" fill="url(#gr)" stroke="#000" stroke-width="1.300"/>
<rect x="1333.4" y="381.3" width="34.6" height="167.7" fill="url(#gg)" stroke="#000" stroke-width="1.300"/>
<rect x="1368.7" y="408.0" width="34.6" height="141.0" fill="url(#gb)" stroke="#000" stroke-width="1.300"/>
<rect x="1285.5" y="213.2" width="132.8" height="335.8" fill="none" stroke="#8c8c8c" stroke-width="1.500"/>
<path d="M1285.5 549.0v7M1418.3 549.0v7" stroke="#8c8c8c" stroke-width="1.300"/>
</svg>
<span class="t" style="left:1253.38px;top:238.90px;font-size:16px;line-height:19px;letter-spacing:-0.356px;color:#d9d9d9;">104</span>
<span class="t" style="left:1253.38px;top:306.10px;font-size:16px;line-height:19px;letter-spacing:-0.356px;color:#d9d9d9;">102</span>
<span class="t" style="left:1253.38px;top:373.30px;font-size:16px;line-height:19px;letter-spacing:-0.356px;color:#d9d9d9;">100</span>
<span class="t" style="left:1261.92px;top:440.20px;font-size:16px;line-height:19px;letter-spacing:-0.356px;color:#d9d9d9;">98</span>
<span class="t" style="left:1261.92px;top:507.30px;font-size:16px;line-height:19px;letter-spacing:-0.356px;color:#d9d9d9;">96</span>
<span class="t" style="left:1339.19px;top:551.50px;font-size:16px;line-height:19px;letter-spacing:-0.356px;color:#d9d9d9;">100</span>
<span class="t" style="left:1083.70px;top:580.50px;font-size:30px;line-height:36px;letter-spacing:0.714px;color:#f4f4f4;">Contrast</span><span class="t" style="left:1210.70px;top:580.50px;font-size:30px;line-height:36px;letter-spacing:1.380px;color:#f4f4f4;">Ratio:</span><span class="t" style="left:1300.90px;top:580.50px;font-size:30px;line-height:36px;letter-spacing:1.250px;color:#f4f4f4;">12652</span>
<span class="t" style="left:1615.00px;top:192.50px;font-size:16px;line-height:19px;letter-spacing:-0.475px;color:#d9d9d9;">Gamma Log/Log</span>
<svg class="abs" style="left:1440px;top:195px" width="480" height="370" viewBox="1440 195 480 370">
<rect x="1479.2" y="213.5" width="412.5" height="329.5" fill="#222"/>
<path d="M1472.7 214.30H1479.2" stroke="#8c8c8c" stroke-width="1.300"/>
<path d="M1472.7 281.00H1891.7" stroke="#8c8c8c" stroke-width="1.300"/>
<path d="M1472.7 345.90H1891.7" stroke="#8c8c8c" stroke-width="1.300"/>
<path d="M1472.7 412.40H1891.7" stroke="#8c8c8c" stroke-width="1.300"/>
<path d="M1472.7 478.50H1891.7" stroke="#8c8c8c" stroke-width="1.300"/>
<path d="M1472.7 542.70H1479.2" stroke="#8c8c8c" stroke-width="1.300"/>
<clipPath id="c2"><rect x="1479.2" y="213.5" width="412.5" height="330.0"/></clipPath><g clip-path="url(#c2)" fill="none" stroke-linejoin="miter" stroke-miterlimit="4">
<polyline stroke="#909090" stroke-width="2.900" points="1479.2,802.0 1499.8,354.5 1520.5,432.0 1541.1,429.7 1561.7,421.3 1582.3,425.9 1603.0,425.9 1623.6,421.1 1644.2,432.1 1664.8,425.4 1685.5,431.2 1706.1,428.0 1726.7,406.3 1747.3,411.1 1768.0,413.5 1788.6,400.1 1809.2,421.2 1829.8,407.4 1850.5,443.4 1871.1,480.2 1891.7,360.2"/>
<polyline stroke="#ffff00" stroke-width="2.700" points="1479.2,810.0 1483.3,521.4 1487.5,473.4 1491.6,449.0 1495.7,433.8 1499.8,423.3 1504.0,415.5 1508.1,409.4 1512.2,404.6 1516.3,400.6 1520.5,397.2 1524.6,394.4 1528.7,391.9 1532.8,389.8 1537.0,387.9 1541.1,386.2 1545.2,384.7 1549.3,383.3 1553.5,382.1 1557.6,380.9 1561.7,379.9 1565.8,378.9 1570.0,378.1 1574.1,377.2 1578.2,376.5 1582.3,375.8 1586.5,375.1 1590.6,374.5 1594.7,373.9 1598.8,373.3 1603.0,372.8 1607.1,372.3 1611.2,371.8 1615.3,371.4 1619.5,371.0 1623.6,370.5 1627.7,370.2 1631.8,369.8 1636.0,369.4 1640.1,369.1 1644.2,368.8 1648.3,368.5 1652.5,368.2 1656.6,367.9 1660.7,367.6 1664.8,367.3 1669.0,367.1 1673.1,366.8 1677.2,366.6 1681.3,366.4 1685.5,366.2 1689.6,365.9 1693.7,365.7 1697.8,365.5 1702.0,365.3 1706.1,365.1 1710.2,365.0 1714.3,364.8 1718.5,364.6 1722.6,364.4 1726.7,364.3 1730.8,364.1 1735.0,364.0 1739.1,363.8 1743.2,363.7 1747.3,363.5 1751.5,363.4 1755.6,363.2 1759.7,363.1 1763.8,363.0 1768.0,362.9 1772.1,362.7 1776.2,362.6 1780.3,362.5 1784.5,362.4 1788.6,362.3 1792.7,362.2 1796.8,362.0 1801.0,361.9 1805.1,361.8 1809.2,361.7 1813.3,361.6 1817.5,361.5 1821.6,361.4 1825.7,361.3 1829.8,361.3 1834.0,361.2 1838.1,361.1 1842.2,361.0 1846.3,360.9 1850.5,360.8 1854.6,360.7 1858.7,360.7 1862.8,360.6 1867.0,360.5 1871.1,360.4 1875.2,360.3 1879.3,360.3 1883.5,360.2 1887.6,360.1 1891.7,360.1"/>
</g>
<rect x="1479.2" y="213.5" width="412.5" height="329.5" fill="none" stroke="#8c8c8c" stroke-width="1.500"/>
<path d="M1479.20 543.0v7" stroke="#8c8c8c" stroke-width="1.300"/>
<path d="M1561.70 543.0v7" stroke="#8c8c8c" stroke-width="1.300"/>
<path d="M1644.20 543.0v7" stroke="#8c8c8c" stroke-width="1.300"/>
<path d="M1726.70 543.0v7" stroke="#8c8c8c" stroke-width="1.300"/>
<path d="M1809.20 543.0v7" stroke="#8c8c8c" stroke-width="1.300"/>
<path d="M1891.70 543.0v7" stroke="#8c8c8c" stroke-width="1.300"/>
</svg>
<span class="t" style="left:1451.15px;top:205.80px;font-size:16px;line-height:19px;letter-spacing:-0.297px;color:#d9d9d9;">2,8</span>
<span class="t" style="left:1451.15px;top:272.50px;font-size:16px;line-height:19px;letter-spacing:-0.297px;color:#d9d9d9;">2,6</span>
<span class="t" style="left:1451.15px;top:337.40px;font-size:16px;line-height:19px;letter-spacing:-0.297px;color:#d9d9d9;">2,4</span>
<span class="t" style="left:1451.15px;top:403.90px;font-size:16px;line-height:19px;letter-spacing:-0.297px;color:#d9d9d9;">2,2</span>
<span class="t" style="left:1463.96px;top:470.00px;font-size:16px;line-height:19px;letter-spacing:-0.356px;color:#d9d9d9;">2</span>
<span class="t" style="left:1451.15px;top:534.20px;font-size:16px;line-height:19px;letter-spacing:-0.297px;color:#d9d9d9;">1,8</span>
<span class="t" style="left:1474.93px;top:551.50px;font-size:16px;line-height:19px;letter-spacing:-0.356px;color:#d9d9d9;">0</span>
<span class="t" style="left:1553.16px;top:551.50px;font-size:16px;line-height:19px;letter-spacing:-0.356px;color:#d9d9d9;">20</span>
<span class="t" style="left:1635.66px;top:551.50px;font-size:16px;line-height:19px;letter-spacing:-0.356px;color:#d9d9d9;">40</span>
<span class="t" style="left:1718.16px;top:551.50px;font-size:16px;line-height:19px;letter-spacing:-0.356px;color:#d9d9d9;">60</span>
<span class="t" style="left:1800.66px;top:551.50px;font-size:16px;line-height:19px;letter-spacing:-0.356px;color:#d9d9d9;">80</span>
<span class="t" style="left:1878.89px;top:551.50px;font-size:16px;line-height:19px;letter-spacing:-0.356px;color:#d9d9d9;">100</span>
<span class="t" style="left:1508.90px;top:580.50px;font-size:30px;line-height:36px;letter-spacing:0.117px;color:#f4f4f4;">Average</span><span class="t" style="left:1628.00px;top:580.50px;font-size:30px;line-height:36px;letter-spacing:0.320px;color:#f4f4f4;">Gamma:</span><span class="t" style="left:1756.00px;top:580.50px;font-size:30px;line-height:36px;letter-spacing:1.225px;color:#f4f4f4;">2,169</span>
<!-- part3 -->
<div style="left:188px;top:630px;width:1732px;height:136px;background:#000"></div>
<div style="left:305.65px;top:634.900px;width:66.000px;height:106.700px;box-sizing:border-box;border:1.800px solid rgb(216,216,216);background:linear-gradient(#000000 0,#000000 50%,#000000 50%,#000000 100%)"></div>
<span class="t" style="left:335.10px;top:744.50px;font-size:13.3px;line-height:16px;letter-spacing:-0.296px;color:#f0f0f0;">0</span>
<div style="left:382.00px;top:634.900px;width:66.000px;height:106.700px;box-sizing:border-box;border:1.800px solid rgb(218,218,218);background:linear-gradient(#060606 0,#060606 50%,#080808 50%,#080808 100%)"></div>
<span class="t" style="left:411.45px;top:744.50px;font-size:13.3px;line-height:16px;letter-spacing:-0.296px;color:#f0f0f0;">5</span>
<div style="left:458.35px;top:634.900px;width:66.000px;height:106.700px;box-sizing:border-box;border:1.800px solid rgb(220,220,220);background:linear-gradient(#131313 0,#131313 50%,#121212 50%,#121212 100%)"></div>
<span class="t" style="left:484.25px;top:744.50px;font-size:13.3px;line-height:16px;letter-spacing:-0.296px;color:#f0f0f0;">10</span>
<div style="left:534.70px;top:634.900px;width:66.000px;height:106.700px;box-sizing:border-box;border:1.800px solid rgb(222,222,222);background:linear-gradient(#1f1f1e 0,#1f1f1e 50%,#1c1c1c 50%,#1c1c1c 100%)"></div>
<span class="t" style="left:560.60px;top:744.50px;font-size:13.3px;line-height:16px;letter-spacing:-0.296px;color:#f0f0f0;">15</span>
<div style="left:611.05px;top:634.900px;width:66.000px;height:106.700px;box-sizing:border-box;border:1.800px solid rgb(224,224,224);background:linear-gradient(#2c2c2b 0,#2c2c2b 50%,#292929 50%,#292929 100%)"></div>
<span class="t" style="left:636.95px;top:744.50px;font-size:13.3px;line-height:16px;letter-spacing:-0.296px;color:#f0f0f0;">20</span>
<div style="left:687.40px;top:634.900px;width:66.000px;height:106.700px;box-sizing:border-box;border:1.800px solid rgb(226,226,226);background:linear-gradient(#3b3b3a 0,#3b3b3a 50%,#373737 50%,#373737 100%)"></div>
<span class="t" style="left:713.30px;top:744.50px;font-size:13.3px;line-height:16px;letter-spacing:-0.296px;color:#f0f0f0;">25</span>
<div style="left:763.75px;top:634.900px;width:66.000px;height:106.700px;box-sizing:border-box;border:1.800px solid rgb(228,228,228);background:linear-gradient(#494948 0,#494948 50%,#454545 50%,#454545 100%)"></div>
<span class="t" style="left:789.65px;top:744.50px;font-size:13.3px;line-height:16px;letter-spacing:-0.296px;color:#f0f0f0;">30</span>
<div style="left:840.10px;top:634.900px;width:66.000px;height:106.700px;box-sizing:border-box;border:1.800px solid rgb(230,230,230);background:linear-gradient(#565655 0,#565655 50%,#535353 50%,#535353 100%)"></div>
<span class="t" style="left:866.00px;top:744.50px;font-size:13.3px;line-height:16px;letter-spacing:-0.296px;color:#f0f0f0;">35</span>
<div style="left:916.45px;top:634.900px;width:66.000px;height:106.700px;box-sizing:border-box;border:1.800px solid rgb(232,232,232);background:linear-gradient(#666665 0,#666665 50%,#616161 50%,#616161 100%)"></div>
<span class="t" style="left:942.35px;top:744.50px;font-size:13.3px;line-height:16px;letter-spacing:-0.296px;color:#f0f0f0;">40</span>
<div style="left:992.80px;top:634.900px;width:66.000px;height:106.700px;box-sizing:border-box;border:1.800px solid rgb(234,234,234);background:linear-gradient(#737372 0,#737372 50%,#6f6f6f 50%,#6f6f6f 100%)"></div>
<span class="t" style="left:1018.70px;top:744.50px;font-size:13.3px;line-height:16px;letter-spacing:-0.296px;color:#f0f0f0;">45</span>
<div style="left:1069.15px;top:634.900px;width:66.000px;height:106.700px;box-sizing:border-box;border:1.800px solid rgb(236,236,236);background:linear-gradient(#868685 0,#868685 50%,#7d7d7d 50%,#7d7d7d 100%)"></div>
<span class="t" style="left:1095.05px;top:744.50px;font-size:13.3px;line-height:16px;letter-spacing:-0.296px;color:#f0f0f0;">50</span>
<div style="left:1145.50px;top:634.900px;width:66.000px;height:106.700px;box-sizing:border-box;border:1.800px solid rgb(237,237,237);background:linear-gradient(#919190 0,#919190 50%,#8a8a8a 50%,#8a8a8a 100%)"></div>
<span class="t" style="left:1171.40px;top:744.50px;font-size:13.3px;line-height:16px;letter-spacing:-0.296px;color:#f0f0f0;">55</span>
<div style="left:1221.85px;top:634.900px;width:66.000px;height:106.700px;box-sizing:border-box;border:1.800px solid rgb(239,239,239);background:linear-gradient(#9c9c9a 0,#9c9c9a 50%,#979797 50%,#979797 100%)"></div>
<span class="t" style="left:1247.75px;top:744.50px;font-size:13.3px;line-height:16px;letter-spacing:-0.296px;color:#f0f0f0;">60</span>
<div style="left:1298.20px;top:634.900px;width:66.000px;height:106.700px;box-sizing:border-box;border:1.800px solid rgb(241,241,241);background:linear-gradient(#a8a8a4 0,#a8a8a4 50%,#a4a4a4 50%,#a4a4a4 100%)"></div>
<span class="t" style="left:1324.10px;top:744.50px;font-size:13.3px;line-height:16px;letter-spacing:-0.296px;color:#f0f0f0;">65</span>
<div style="left:1374.55px;top:634.900px;width:66.000px;height:106.700px;box-sizing:border-box;border:1.800px solid rgb(243,243,243);background:linear-gradient(#b2b2ae 0,#b2b2ae 50%,#b0b0b0 50%,#b0b0b0 100%)"></div>
<span class="t" style="left:1400.45px;top:744.50px;font-size:13.3px;line-height:16px;letter-spacing:-0.296px;color:#f0f0f0;">70</span>
<div style="left:1450.90px;top:634.900px;width:66.000px;height:106.700px;box-sizing:border-box;border:1.800px solid rgb(245,245,245);background:linear-gradient(#c0c0bb 0,#c0c0bb 50%,#bdbdbd 50%,#bdbdbd 100%)"></div>
<span class="t" style="left:1476.80px;top:744.50px;font-size:13.3px;line-height:16px;letter-spacing:-0.296px;color:#f0f0f0;">75</span>
<div style="left:1527.25px;top:634.900px;width:66.000px;height:106.700px;box-sizing:border-box;border:1.800px solid rgb(247,247,247);background:linear-gradient(#cdcdc9 0,#cdcdc9 50%,#cacaca 50%,#cacaca 100%)"></div>
<span class="t" style="left:1553.15px;top:744.50px;font-size:13.3px;line-height:16px;letter-spacing:-0.296px;color:#f0f0f0;">80</span>
<div style="left:1603.60px;top:634.900px;width:66.000px;height:106.700px;box-sizing:border-box;border:1.800px solid rgb(249,249,249);background:linear-gradient(#dadad6 0,#dadad6 50%,#d7d7d7 50%,#d7d7d7 100%)"></div>
<span class="t" style="left:1629.50px;top:744.50px;font-size:13.3px;line-height:16px;letter-spacing:-0.296px;color:#f0f0f0;">85</span>
<div style="left:1679.95px;top:634.900px;width:66.000px;height:106.700px;box-sizing:border-box;border:1.800px solid rgb(251,251,251);background:linear-gradient(#e6e6e2 0,#e6e6e2 50%,#e4e4e4 50%,#e4e4e4 100%)"></div>
<span class="t" style="left:1705.85px;top:744.50px;font-size:13.3px;line-height:16px;letter-spacing:-0.296px;color:#f0f0f0;">90</span>
<div style="left:1756.30px;top:634.900px;width:66.000px;height:106.700px;box-sizing:border-box;border:1.800px solid rgb(253,253,253);background:linear-gradient(#f3f4f0 0,#f3f4f0 50%,#f2f2f2 50%,#f2f2f2 100%)"></div>
<span class="t" style="left:1782.20px;top:744.50px;font-size:13.3px;line-height:16px;letter-spacing:-0.296px;color:#f0f0f0;">95</span>
<div style="left:1832.65px;top:634.900px;width:66.000px;height:106.700px;box-sizing:border-box;border:1.800px solid rgb(255,255,255);background:linear-gradient(#ffffff 0,#ffffff 50%,#ffffff 50%,#ffffff 100%)"></div>
<span class="t" style="left:1855.00px;top:744.50px;font-size:13.3px;line-height:16px;letter-spacing:-0.296px;color:#f0f0f0;">100</span>
<span class="t" style="left:296.500px;top:659.500px;font-size:13.300px;line-height:16px;color:#f0f0f0;transform:translate(-50%,-50%) rotate(-90deg);letter-spacing:-0.250px">Actual</span>
<span class="t" style="left:296.500px;top:718.500px;font-size:13.300px;line-height:16px;color:#f0f0f0;transform:translate(-50%,-50%) rotate(-90deg);letter-spacing:-0.250px">Target</span>
<!-- part4 -->
<span class="t" style="left:209.20px;top:807.10px;font-size:30px;line-height:36px;letter-spacing:1.100px;color:#f4f4f4;">Current</span><span class="t" style="left:324.90px;top:807.10px;font-size:30px;line-height:36px;letter-spacing:0.383px;color:#f4f4f4;">Reading</span>
<span class="t" style="left:209.75px;top:854.20px;font-size:25.5px;line-height:31px;letter-spacing:1.260px;color:#f4f4f4;">x:</span><span class="t" style="left:235.68px;top:854.20px;font-size:25.5px;line-height:31px;letter-spacing:0.793px;color:#f4f4f4;">0,3146</span><span class="t" style="left:365.40px;top:854.20px;font-size:25.5px;line-height:31px;letter-spacing:1.505px;color:#f4f4f4;">y:</span><span class="t" style="left:392.08px;top:854.20px;font-size:25.5px;line-height:31px;letter-spacing:0.582px;color:#f4f4f4;">0,3315</span>
<span class="t" style="left:209.17px;top:889.70px;font-size:25.5px;line-height:31px;letter-spacing:2.030px;color:#f4f4f4;">u&#x27;:</span><span class="t" style="left:244.88px;top:889.70px;font-size:25.5px;line-height:31px;letter-spacing:0.613px;color:#f4f4f4;">0,1982</span><span class="t" style="left:365.40px;top:889.70px;font-size:25.5px;line-height:31px;letter-spacing:1.330px;color:#f4f4f4;">v&#x27;:</span><span class="t" style="left:398.18px;top:889.70px;font-size:25.5px;line-height:31px;letter-spacing:0.713px;color:#f4f4f4;">0,4699</span>
<span class="t" style="left:209.68px;top:925.00px;font-size:25.5px;line-height:31px;letter-spacing:1.845px;color:#f4f4f4;">cd/m²:</span><span class="t" style="left:295.09px;top:925.00px;font-size:25.5px;line-height:31px;letter-spacing:0.650px;color:#f4f4f4;">474,3486</span>
<span class="t" style="left:209.600px;top:960.800px;font-size:25.500px;line-height:31px;color:#f4f4f4;transform:scaleX(0.885);transform-origin:0 50%">ΔE</span>
<span class="t" style="left:245.82px;top:960.00px;font-size:25.5px;line-height:31px;letter-spacing:0.905px;color:#f4f4f4;">2000:</span><span class="t" style="left:320.06px;top:960.00px;font-size:25.5px;line-height:31px;letter-spacing:0.297px;color:#f4f4f4;">1,32</span>
<span class="t" style="left:640.00px;top:785.50px;font-size:16px;line-height:19px;letter-spacing:-0.741px;color:#d9d9d9;">CIE 1931 xy</span>
<div style="left:566.8px;top:805.5px;width:262.0px;height:171.7px;background:radial-gradient(ellipse 185px 130px at 129.8px 84.5px,rgba(255,255,255,1) 0,rgba(255,255,255,.92) 12%,rgba(255,255,255,.55) 45%,rgba(255,255,255,.18) 80%,rgba(255,255,255,0) 100%),conic-gradient(from 0deg at 129.8px 84.5px,#d8ffc0 0deg,#ffffb8 32deg,#ffdca8 58deg,#ffb0a8 90deg,#ff7cae 123deg,#ff90d0 150deg,#ffb8f4 178deg,#d4c0ff 210deg,#98c0ff 238deg,#90e4ff 256deg,#8cffff 275deg,#78fcc4 303deg,#90ffb8 330deg,#d8ffc0 360deg)"></div>
<svg class="abs" style="left:520px;top:790px" width="330" height="215" viewBox="520 790 330 215">
<clipPath id="c3"><rect x="566.8" y="805.5" width="262.0" height="171.7"/></clipPath>
<g clip-path="url(#c3)"><path d="M601.500 977.500L829.500 833" stroke="#000" stroke-width="3.200" fill="none"/></g>
<rect x="566.8" y="805.5" width="262.0" height="171.7" fill="none" stroke="#9a9a9a" stroke-width="1.500"/>
<path d="M578.1 977.2v6" stroke="#8c8c8c" stroke-width="1.300"/>
<path d="M630.2 977.2v6" stroke="#8c8c8c" stroke-width="1.300"/>
<path d="M682.3 977.2v6" stroke="#8c8c8c" stroke-width="1.300"/>
<path d="M734.6 977.2v6" stroke="#8c8c8c" stroke-width="1.300"/>
<path d="M787.0 977.2v6" stroke="#8c8c8c" stroke-width="1.300"/>
<path d="M566.8 855.0h-5" stroke="#8c8c8c" stroke-width="1.300"/>
<path d="M566.8 924.1h-5" stroke="#8c8c8c" stroke-width="1.300"/>
<circle cx="705.300" cy="850" r="4.600" fill="#0a0a0a"/><circle cx="719.200" cy="844.800" r="4.600" fill="#0c0c0c"/>
<circle cx="715.2" cy="862.0" r="4.600" fill="#1c1c1c" stroke="#000" stroke-width="0.800"/>
<circle cx="713.8" cy="865.5" r="4.600" fill="#303030" stroke="#000" stroke-width="0.800"/>
<circle cx="712.4" cy="868.5" r="4.600" fill="#444444" stroke="#000" stroke-width="0.800"/>
<circle cx="711.2" cy="871.2" r="4.600" fill="#3a3a3a" stroke="#000" stroke-width="0.800"/>
<circle cx="710.0" cy="873.6" r="4.600" fill="#303030" stroke="#000" stroke-width="0.800"/>
<circle cx="709.2" cy="875.8" r="4.600" fill="#282828" stroke="#000" stroke-width="0.800"/>
<circle cx="708.4" cy="877.8" r="4.600" fill="#1e1e1e" stroke="#000" stroke-width="0.800"/>
<circle cx="707.6" cy="879.5" r="4.600" fill="#141414" stroke="#000" stroke-width="0.800"/>
<circle cx="706.700" cy="881.600" r="4.200" fill="#fff" stroke="#000" stroke-width="1.200"/>
<rect x="690" y="883" width="13.400" height="13.400" fill="#fff" stroke="#000" stroke-width="1.300"/>
</svg>
<span class="t" style="left:530.61px;top:846.30px;font-size:16px;line-height:19px;letter-spacing:-0.311px;color:#d9d9d9;">0,34</span>
<span class="t" style="left:530.61px;top:915.50px;font-size:16px;line-height:19px;letter-spacing:-0.311px;color:#d9d9d9;">0,32</span>
<span class="t" style="left:563.15px;top:985.00px;font-size:16px;line-height:19px;letter-spacing:-0.311px;color:#d9d9d9;">0,29</span>
<span class="t" style="left:619.52px;top:985.00px;font-size:16px;line-height:19px;letter-spacing:-0.297px;color:#d9d9d9;">0,3</span>
<span class="t" style="left:667.35px;top:985.00px;font-size:16px;line-height:19px;letter-spacing:-0.311px;color:#d9d9d9;">0,31</span>
<span class="t" style="left:719.65px;top:985.00px;font-size:16px;line-height:19px;letter-spacing:-0.311px;color:#d9d9d9;">0,32</span>
<span class="t" style="left:772.05px;top:985.00px;font-size:16px;line-height:19px;letter-spacing:-0.311px;color:#d9d9d9;">0,33</span>
<div style="left:838.6px;top:775.0px;width:1072.2px;height:235.0px;background:#555;box-shadow:-1px -1px 0 1px #161616,1px 0 0 0.500px #222"></div>
<div style="left:838.6px;top:775.0px;width:1072.2px;height:26.400px;background:linear-gradient(#2a2a2a 0,#2b2b2b 47%,#1a1a1a 54%,#0f0f0f 100%)"></div>
<div style="left:838.6px;top:775.0px;width:1072.2px;height:235.0px;overflow:hidden">
<span class="t" style="left:157.75px;top:5.80px;font-size:13.3px;line-height:16px;letter-spacing:-0.296px;color:#f0f0f0;">0</span>
<span class="t" style="left:225.96px;top:5.80px;font-size:13.3px;line-height:16px;letter-spacing:-0.296px;color:#f0f0f0;">5</span>
<span class="t" style="left:290.63px;top:5.80px;font-size:13.3px;line-height:16px;letter-spacing:-0.296px;color:#f0f0f0;">10</span>
<span class="t" style="left:358.84px;top:5.80px;font-size:13.3px;line-height:16px;letter-spacing:-0.296px;color:#f0f0f0;">15</span>
<span class="t" style="left:427.06px;top:5.80px;font-size:13.3px;line-height:16px;letter-spacing:-0.296px;color:#f0f0f0;">20</span>
<span class="t" style="left:495.27px;top:5.80px;font-size:13.3px;line-height:16px;letter-spacing:-0.296px;color:#f0f0f0;">25</span>
<span class="t" style="left:563.49px;top:5.80px;font-size:13.3px;line-height:16px;letter-spacing:-0.296px;color:#f0f0f0;">30</span>
<span class="t" style="left:631.70px;top:5.80px;font-size:13.3px;line-height:16px;letter-spacing:-0.296px;color:#f0f0f0;">35</span>
<span class="t" style="left:699.92px;top:5.80px;font-size:13.3px;line-height:16px;letter-spacing:-0.296px;color:#f0f0f0;">40</span>
<span class="t" style="left:768.13px;top:5.80px;font-size:13.3px;line-height:16px;letter-spacing:-0.296px;color:#f0f0f0;">45</span>
<span class="t" style="left:836.35px;top:5.80px;font-size:13.3px;line-height:16px;letter-spacing:-0.296px;color:#f0f0f0;">50</span>
<span class="t" style="left:904.56px;top:5.80px;font-size:13.3px;line-height:16px;letter-spacing:-0.296px;color:#f0f0f0;">55</span>
<span class="t" style="left:972.78px;top:5.80px;font-size:13.3px;line-height:16px;letter-spacing:-0.296px;color:#f0f0f0;">60</span>
<span class="t" style="left:1040.99px;top:5.80px;font-size:13.3px;line-height:16px;letter-spacing:-0.296px;color:#f0f0f0;">65</span>
<div style="left:0;top:26.40px;width:1072.2px;height:24.10px;background:#3c3c3c"></div>
<span class="t" style="left:10.90px;top:31.70px;font-size:13.3px;line-height:16px;letter-spacing:-0.310px;font-weight:bold;color:#f4f4f4;">x: CIE31</span>
<span class="t" style="left:130.90px;top:31.70px;font-size:13.3px;line-height:16px;letter-spacing:-0.292px;color:#f2f2f2;">0,3391</span>
<span class="t" style="left:199.11px;top:31.70px;font-size:13.3px;line-height:16px;letter-spacing:-0.292px;color:#f2f2f2;">0,3171</span>
<span class="t" style="left:267.33px;top:31.70px;font-size:13.3px;line-height:16px;letter-spacing:-0.292px;color:#f2f2f2;">0,3145</span>
<span class="t" style="left:335.54px;top:31.70px;font-size:13.3px;line-height:16px;letter-spacing:-0.292px;color:#f2f2f2;">0,3163</span>
<span class="t" style="left:403.76px;top:31.70px;font-size:13.3px;line-height:16px;letter-spacing:-0.292px;color:#f2f2f2;">0,3160</span>
<span class="t" style="left:471.98px;top:31.70px;font-size:13.3px;line-height:16px;letter-spacing:-0.292px;color:#f2f2f2;">0,3158</span>
<span class="t" style="left:540.19px;top:31.70px;font-size:13.3px;line-height:16px;letter-spacing:-0.292px;color:#f2f2f2;">0,3153</span>
<span class="t" style="left:608.41px;top:31.70px;font-size:13.3px;line-height:16px;letter-spacing:-0.292px;color:#f2f2f2;">0,3152</span>
<span class="t" style="left:676.62px;top:31.70px;font-size:13.3px;line-height:16px;letter-spacing:-0.292px;color:#f2f2f2;">0,3153</span>
<span class="t" style="left:744.83px;top:31.70px;font-size:13.3px;line-height:16px;letter-spacing:-0.292px;color:#f2f2f2;">0,3153</span>
<span class="t" style="left:813.05px;top:31.70px;font-size:13.3px;line-height:16px;letter-spacing:-0.292px;color:#f2f2f2;">0,3151</span>
<span class="t" style="left:881.26px;top:31.70px;font-size:13.3px;line-height:16px;letter-spacing:-0.292px;color:#f2f2f2;">0,3149</span>
<span class="t" style="left:949.48px;top:31.70px;font-size:13.3px;line-height:16px;letter-spacing:-0.292px;color:#f2f2f2;">0,3147</span>
<span class="t" style="left:1017.70px;top:31.70px;font-size:13.3px;line-height:16px;letter-spacing:-0.292px;color:#f2f2f2;">0,3148</span>
<div style="left:0;top:50.50px;width:1072.2px;height:24.10px;background:#808080"></div>
<span class="t" style="left:10.90px;top:55.80px;font-size:13.3px;line-height:16px;letter-spacing:-0.310px;font-weight:bold;color:#f4f4f4;">y: CIE31</span>
<span class="t" style="left:130.90px;top:55.80px;font-size:13.3px;line-height:16px;letter-spacing:-0.292px;color:#f2f2f2;">0,3950</span>
<span class="t" style="left:199.11px;top:55.80px;font-size:13.3px;line-height:16px;letter-spacing:-0.292px;color:#f2f2f2;">0,3425</span>
<span class="t" style="left:267.33px;top:55.80px;font-size:13.3px;line-height:16px;letter-spacing:-0.292px;color:#f2f2f2;">0,3405</span>
<span class="t" style="left:335.54px;top:55.80px;font-size:13.3px;line-height:16px;letter-spacing:-0.292px;color:#f2f2f2;">0,3369</span>
<span class="t" style="left:403.76px;top:55.80px;font-size:13.3px;line-height:16px;letter-spacing:-0.292px;color:#f2f2f2;">0,3363</span>
<span class="t" style="left:471.98px;top:55.80px;font-size:13.3px;line-height:16px;letter-spacing:-0.292px;color:#f2f2f2;">0,3356</span>
<span class="t" style="left:540.19px;top:55.80px;font-size:13.3px;line-height:16px;letter-spacing:-0.292px;color:#f2f2f2;">0,3345</span>
<span class="t" style="left:608.41px;top:55.80px;font-size:13.3px;line-height:16px;letter-spacing:-0.292px;color:#f2f2f2;">0,3341</span>
<span class="t" style="left:676.62px;top:55.80px;font-size:13.3px;line-height:16px;letter-spacing:-0.292px;color:#f2f2f2;">0,3339</span>
<span class="t" style="left:744.83px;top:55.80px;font-size:13.3px;line-height:16px;letter-spacing:-0.292px;color:#f2f2f2;">0,3336</span>
<span class="t" style="left:813.05px;top:55.80px;font-size:13.3px;line-height:16px;letter-spacing:-0.292px;color:#f2f2f2;">0,3332</span>
<span class="t" style="left:881.26px;top:55.80px;font-size:13.3px;line-height:16px;letter-spacing:-0.292px;color:#f2f2f2;">0,3328</span>
<span class="t" style="left:949.48px;top:55.80px;font-size:13.3px;line-height:16px;letter-spacing:-0.292px;color:#f2f2f2;">0,3324</span>
<span class="t" style="left:1017.70px;top:55.80px;font-size:13.3px;line-height:16px;letter-spacing:-0.292px;color:#f2f2f2;">0,3324</span>
<div style="left:0;top:74.60px;width:1072.2px;height:24.10px;background:#3c3c3c"></div>
<span class="t" style="left:10.90px;top:79.90px;font-size:13.3px;line-height:16px;letter-spacing:-1.372px;font-weight:bold;color:#f4f4f4;">Y</span>
<span class="t" style="left:130.90px;top:79.90px;font-size:13.3px;line-height:16px;letter-spacing:-0.292px;color:#f2f2f2;">0,0375</span>
<span class="t" style="left:199.11px;top:79.90px;font-size:13.3px;line-height:16px;letter-spacing:-0.292px;color:#f2f2f2;">0,4139</span>
<span class="t" style="left:267.33px;top:79.90px;font-size:13.3px;line-height:16px;letter-spacing:-0.292px;color:#f2f2f2;">3,5798</span>
<span class="t" style="left:335.54px;top:79.90px;font-size:13.3px;line-height:16px;letter-spacing:-0.292px;color:#f2f2f2;">7,9593</span>
<span class="t" style="left:403.76px;top:79.90px;font-size:13.3px;line-height:16px;letter-spacing:-0.295px;color:#f2f2f2;">14,3767</span>
<span class="t" style="left:471.98px;top:79.90px;font-size:13.3px;line-height:16px;letter-spacing:-0.295px;color:#f2f2f2;">23,9943</span>
<span class="t" style="left:540.19px;top:79.90px;font-size:13.3px;line-height:16px;letter-spacing:-0.295px;color:#f2f2f2;">34,7659</span>
<span class="t" style="left:608.41px;top:79.90px;font-size:13.3px;line-height:16px;letter-spacing:-0.295px;color:#f2f2f2;">48,1479</span>
<span class="t" style="left:676.62px;top:79.90px;font-size:13.3px;line-height:16px;letter-spacing:-0.295px;color:#f2f2f2;">66,7605</span>
<span class="t" style="left:744.83px;top:79.90px;font-size:13.3px;line-height:16px;letter-spacing:-0.295px;color:#f2f2f2;">84,9295</span>
<span class="t" style="left:813.05px;top:79.90px;font-size:13.3px;line-height:16px;letter-spacing:-0.298px;color:#f2f2f2;">108,3195</span>
<span class="t" style="left:881.26px;top:79.90px;font-size:13.3px;line-height:16px;letter-spacing:-0.298px;color:#f2f2f2;">130,4893</span>
<span class="t" style="left:949.48px;top:79.90px;font-size:13.3px;line-height:16px;letter-spacing:-0.298px;color:#f2f2f2;">152,7918</span>
<span class="t" style="left:1017.70px;top:79.90px;font-size:13.3px;line-height:16px;letter-spacing:-0.298px;color:#f2f2f2;">184,2240</span>
<div style="left:0;top:98.70px;width:1072.2px;height:24.10px;background:#808080"></div>
<span class="t" style="left:10.90px;top:104.00px;font-size:13.3px;line-height:16px;font-weight:bold;color:#f4f4f4;">Target Y</span>
<span class="t" style="left:130.90px;top:104.00px;font-size:13.3px;line-height:16px;letter-spacing:-0.292px;color:#f2f2f2;">0,0375</span>
<span class="t" style="left:199.11px;top:104.00px;font-size:13.3px;line-height:16px;letter-spacing:-0.292px;color:#f2f2f2;">0,7891</span>
<span class="t" style="left:267.33px;top:104.00px;font-size:13.3px;line-height:16px;letter-spacing:-0.292px;color:#f2f2f2;">2,8960</span>
<span class="t" style="left:335.54px;top:104.00px;font-size:13.3px;line-height:16px;letter-spacing:-0.292px;color:#f2f2f2;">6,3403</span>
<span class="t" style="left:403.76px;top:104.00px;font-size:13.3px;line-height:16px;letter-spacing:-0.289px;color:#f2f2f2;">11,9394</span>
<span class="t" style="left:471.98px;top:104.00px;font-size:13.3px;line-height:16px;letter-spacing:-0.295px;color:#f2f2f2;">19,6919</span>
<span class="t" style="left:540.19px;top:104.00px;font-size:13.3px;line-height:16px;letter-spacing:-0.295px;color:#f2f2f2;">28,9225</span>
<span class="t" style="left:608.41px;top:104.00px;font-size:13.3px;line-height:16px;letter-spacing:-0.295px;color:#f2f2f2;">41,3272</span>
<span class="t" style="left:676.62px;top:104.00px;font-size:13.3px;line-height:16px;letter-spacing:-0.295px;color:#f2f2f2;">56,3822</span>
<span class="t" style="left:744.83px;top:104.00px;font-size:13.3px;line-height:16px;letter-spacing:-0.295px;color:#f2f2f2;">74,2286</span>
<span class="t" style="left:813.05px;top:104.00px;font-size:13.3px;line-height:16px;letter-spacing:-0.295px;color:#f2f2f2;">94,9975</span>
<span class="t" style="left:881.26px;top:104.00px;font-size:13.3px;line-height:16px;letter-spacing:-0.293px;color:#f2f2f2;">116,8691</span>
<span class="t" style="left:949.48px;top:104.00px;font-size:13.3px;line-height:16px;letter-spacing:-0.298px;color:#f2f2f2;">143,5972</span>
<span class="t" style="left:1017.70px;top:104.00px;font-size:13.3px;line-height:16px;letter-spacing:-0.298px;color:#f2f2f2;">173,5879</span>
<div style="left:0;top:122.80px;width:1072.2px;height:24.10px;background:#3c3c3c"></div>
<span class="t" style="left:10.90px;top:128.10px;font-size:13.3px;line-height:16px;letter-spacing:0.083px;font-weight:bold;color:#f4f4f4;">Gamma Log/Log</span>
<span class="t" style="left:130.90px;top:128.10px;font-size:13.3px;line-height:16px;letter-spacing:-0.292px;color:#f2f2f2;">1,0242</span>
<span class="t" style="left:199.11px;top:128.10px;font-size:13.3px;line-height:16px;letter-spacing:-0.292px;color:#f2f2f2;">2,3667</span>
<span class="t" style="left:267.33px;top:128.10px;font-size:13.3px;line-height:16px;letter-spacing:-0.292px;color:#f2f2f2;">2,1403</span>
<span class="t" style="left:335.54px;top:128.10px;font-size:13.3px;line-height:16px;letter-spacing:-0.292px;color:#f2f2f2;">2,1472</span>
<span class="t" style="left:403.76px;top:128.10px;font-size:13.3px;line-height:16px;letter-spacing:-0.292px;color:#f2f2f2;">2,1724</span>
<span class="t" style="left:471.98px;top:128.10px;font-size:13.3px;line-height:16px;letter-spacing:-0.292px;color:#f2f2f2;">2,1587</span>
<span class="t" style="left:540.19px;top:128.10px;font-size:13.3px;line-height:16px;letter-spacing:-0.292px;color:#f2f2f2;">2,1588</span>
<span class="t" style="left:608.41px;top:128.10px;font-size:13.3px;line-height:16px;letter-spacing:-0.292px;color:#f2f2f2;">2,1733</span>
<span class="t" style="left:676.62px;top:128.10px;font-size:13.3px;line-height:16px;letter-spacing:-0.292px;color:#f2f2f2;">2,1400</span>
<span class="t" style="left:744.83px;top:128.10px;font-size:13.3px;line-height:16px;letter-spacing:-0.292px;color:#f2f2f2;">2,1601</span>
<span class="t" style="left:813.05px;top:128.10px;font-size:13.3px;line-height:16px;letter-spacing:-0.292px;color:#f2f2f2;">2,1428</span>
<span class="t" style="left:881.26px;top:128.10px;font-size:13.3px;line-height:16px;letter-spacing:-0.292px;color:#f2f2f2;">2,1524</span>
<span class="t" style="left:949.48px;top:128.10px;font-size:13.3px;line-height:16px;letter-spacing:-0.292px;color:#f2f2f2;">2,2177</span>
<span class="t" style="left:1017.70px;top:128.10px;font-size:13.3px;line-height:16px;letter-spacing:-0.292px;color:#f2f2f2;">2,2032</span>
<div style="left:0;top:146.90px;width:1072.2px;height:24.10px;background:#808080"></div>
<span class="t" style="left:10.90px;top:152.20px;font-size:13.3px;line-height:16px;letter-spacing:-0.945px;font-weight:bold;color:#f4f4f4;">CCT</span>
<span class="t" style="left:130.90px;top:152.20px;font-size:13.3px;line-height:16px;letter-spacing:-0.300px;color:#f2f2f2;">5290,0000</span>
<span class="t" style="left:199.11px;top:152.20px;font-size:13.3px;line-height:16px;letter-spacing:-0.300px;color:#f2f2f2;">6197,0000</span>
<span class="t" style="left:267.33px;top:152.20px;font-size:13.3px;line-height:16px;letter-spacing:-0.300px;color:#f2f2f2;">6337,0000</span>
<span class="t" style="left:335.54px;top:152.20px;font-size:13.3px;line-height:16px;letter-spacing:-0.300px;color:#f2f2f2;">6264,0000</span>
<span class="t" style="left:403.76px;top:152.20px;font-size:13.3px;line-height:16px;letter-spacing:-0.300px;color:#f2f2f2;">6282,0000</span>
<span class="t" style="left:471.98px;top:152.20px;font-size:13.3px;line-height:16px;letter-spacing:-0.300px;color:#f2f2f2;">6299,0000</span>
<span class="t" style="left:540.19px;top:152.20px;font-size:13.3px;line-height:16px;letter-spacing:-0.300px;color:#f2f2f2;">6329,0000</span>
<span class="t" style="left:608.41px;top:152.20px;font-size:13.3px;line-height:16px;letter-spacing:-0.300px;color:#f2f2f2;">6336,0000</span>
<span class="t" style="left:676.62px;top:152.20px;font-size:13.3px;line-height:16px;letter-spacing:-0.300px;color:#f2f2f2;">6336,0000</span>
<span class="t" style="left:744.83px;top:152.20px;font-size:13.3px;line-height:16px;letter-spacing:-0.300px;color:#f2f2f2;">6337,0000</span>
<span class="t" style="left:813.05px;top:152.20px;font-size:13.3px;line-height:16px;letter-spacing:-0.300px;color:#f2f2f2;">6348,0000</span>
<span class="t" style="left:881.26px;top:152.20px;font-size:13.3px;line-height:16px;letter-spacing:-0.300px;color:#f2f2f2;">6361,0000</span>
<span class="t" style="left:949.48px;top:152.20px;font-size:13.3px;line-height:16px;letter-spacing:-0.300px;color:#f2f2f2;">6375,0000</span>
<span class="t" style="left:1017.70px;top:152.20px;font-size:13.3px;line-height:16px;letter-spacing:-0.300px;color:#f2f2f2;">6371,0000</span>
<div style="left:0;top:171.00px;width:1072.2px;height:24.10px;background:#3c3c3c"></div>
<span class="t" style="left:10.90px;top:176.30px;font-size:13.3px;line-height:16px;letter-spacing:0.041px;font-weight:bold;color:#f4f4f4;">ΔE 2000</span>
<span class="t" style="left:130.90px;top:176.30px;font-size:13.3px;line-height:16px;letter-spacing:-0.292px;color:#f2f2f2;">0,0647</span>
<span class="t" style="left:199.11px;top:176.30px;font-size:13.3px;line-height:16px;letter-spacing:-0.292px;color:#f2f2f2;">0,4489</span>
<span class="t" style="left:267.33px;top:176.30px;font-size:13.3px;line-height:16px;letter-spacing:-0.292px;color:#f2f2f2;">1,6432</span>
<span class="t" style="left:335.54px;top:176.30px;font-size:13.3px;line-height:16px;letter-spacing:-0.292px;color:#f2f2f2;">1,8399</span>
<span class="t" style="left:403.76px;top:176.30px;font-size:13.3px;line-height:16px;letter-spacing:-0.292px;color:#f2f2f2;">2,0023</span>
<span class="t" style="left:471.98px;top:176.30px;font-size:13.3px;line-height:16px;letter-spacing:-0.292px;color:#f2f2f2;">2,4607</span>
<span class="t" style="left:540.19px;top:176.30px;font-size:13.3px;line-height:16px;letter-spacing:-0.292px;color:#f2f2f2;">2,6376</span>
<span class="t" style="left:608.41px;top:176.30px;font-size:13.3px;line-height:16px;letter-spacing:-0.292px;color:#f2f2f2;">2,6561</span>
<span class="t" style="left:676.62px;top:176.30px;font-size:13.3px;line-height:16px;letter-spacing:-0.292px;color:#f2f2f2;">3,3475</span>
<span class="t" style="left:744.83px;top:176.30px;font-size:13.3px;line-height:16px;letter-spacing:-0.292px;color:#f2f2f2;">3,1907</span>
<span class="t" style="left:813.05px;top:176.30px;font-size:13.3px;line-height:16px;letter-spacing:-0.292px;color:#f2f2f2;">3,2735</span>
<span class="t" style="left:881.26px;top:176.30px;font-size:13.3px;line-height:16px;letter-spacing:-0.284px;color:#f2f2f2;">2,8118</span>
<span class="t" style="left:949.48px;top:176.30px;font-size:13.3px;line-height:16px;letter-spacing:-0.292px;color:#f2f2f2;">1,8935</span>
<span class="t" style="left:1017.70px;top:176.30px;font-size:13.3px;line-height:16px;letter-spacing:-0.292px;color:#f2f2f2;">1,8871</span>
<div style="left:0;top:195.10px;width:1072.2px;height:24.10px;background:#808080"></div>
<span class="t" style="left:10.90px;top:200.40px;font-size:13.3px;line-height:16px;letter-spacing:-0.219px;font-weight:bold;color:#f4f4f4;">ΔE ITP</span>
<span class="t" style="left:130.90px;top:200.40px;font-size:13.3px;line-height:16px;letter-spacing:-0.292px;color:#f2f2f2;">4,4520</span>
<span class="t" style="left:199.11px;top:200.40px;font-size:13.3px;line-height:16px;letter-spacing:-0.295px;color:#f2f2f2;">20,8363</span>
<span class="t" style="left:267.33px;top:200.40px;font-size:13.3px;line-height:16px;letter-spacing:-0.295px;color:#f2f2f2;">10,2579</span>
<span class="t" style="left:335.54px;top:200.40px;font-size:13.3px;line-height:16px;letter-spacing:-0.295px;color:#f2f2f2;">12,3667</span>
<span class="t" style="left:403.76px;top:200.40px;font-size:13.3px;line-height:16px;letter-spacing:-0.289px;color:#f2f2f2;">11,0824</span>
<span class="t" style="left:471.98px;top:200.40px;font-size:13.3px;line-height:16px;letter-spacing:-0.295px;color:#f2f2f2;">12,5061</span>
<span class="t" style="left:540.19px;top:200.40px;font-size:13.3px;line-height:16px;letter-spacing:-0.289px;color:#f2f2f2;">12,1162</span>
<span class="t" style="left:608.41px;top:200.40px;font-size:13.3px;line-height:16px;letter-spacing:-0.295px;color:#f2f2f2;">10,4297</span>
<span class="t" style="left:676.62px;top:200.40px;font-size:13.3px;line-height:16px;letter-spacing:-0.289px;color:#f2f2f2;">11,8306</span>
<span class="t" style="left:744.83px;top:200.40px;font-size:13.3px;line-height:16px;letter-spacing:-0.292px;color:#f2f2f2;">9,6678</span>
<span class="t" style="left:813.05px;top:200.40px;font-size:13.3px;line-height:16px;letter-spacing:-0.292px;color:#f2f2f2;">9,5719</span>
<span class="t" style="left:881.26px;top:200.40px;font-size:13.3px;line-height:16px;letter-spacing:-0.292px;color:#f2f2f2;">8,1584</span>
<span class="t" style="left:949.48px;top:200.40px;font-size:13.3px;line-height:16px;letter-spacing:-0.292px;color:#f2f2f2;">4,7521</span>
<span class="t" style="left:1017.70px;top:200.40px;font-size:13.3px;line-height:16px;letter-spacing:-0.292px;color:#f2f2f2;">4,6216</span>
</div>
<div style="left:838.6px;top:994.2px;width:1072.2px;height:15.800px;background:#5e5e5e"></div>
<div style="left:854.500px;top:996.2px;width:714.500px;height:12.600px;border-radius:6px;background:#434343"></div>
<svg class="abs" style="left:841px;top:996.2px" width="12" height="13"><rect x="0" y="0" width="11" height="12.500" rx="2" fill="#8a8a8a"/><path d="M8 2.200v8.600l-5.500-4.300z" fill="#333"/></svg>
<svg class="abs" style="left:1898.500px;top:996.2px" width="12" height="13"><rect x="0" y="0" width="11" height="12.500" rx="2" fill="#8a8a8a"/><path d="M3.500 2.200v8.600l5.500-4.300z" fill="#333"/></svg>
<!-- part5 -->
<div style="left:188px;top:1096px;width:1732px;height:59px;background:#363636"></div>
<div style="left:188.70px;top:1096.900px;width:65.900px;height:59px;border-radius:4px 4px 0 0;background:linear-gradient(#a6a6a6 0,#8e8e8e 3px,#7e7e7e 50%,#5e5e5e 100%)"></div>
<div style="left:193.50px;top:1102.000px;width:56.400px;height:33.600px;border-radius:3.500px;background:#000000;box-shadow:inset 0 1px 2px rgba(0,0,0,.38),0 0 0 0.600px rgba(0,0,0,.16)"></div>
<span class="t" style="left:219.01px;top:1141.20px;font-size:9.6px;line-height:12px;letter-spacing:-0.160px;font-weight:bold;color:#2c2c2c;">0</span>
<div style="left:256.65px;top:1096.900px;width:65.900px;height:59px;border-radius:4px 4px 0 0;background:linear-gradient(#a6a6a6 0,#8e8e8e 3px,#7e7e7e 50%,#5e5e5e 100%)"></div>
<div style="left:261.45px;top:1102.000px;width:56.400px;height:33.600px;border-radius:3.500px;background:#0e0e0e;box-shadow:inset 0 1px 2px rgba(0,0,0,.38),0 0 0 0.600px rgba(0,0,0,.16)"></div>
<span class="t" style="left:286.96px;top:1141.20px;font-size:9.6px;line-height:12px;letter-spacing:-0.160px;font-weight:bold;color:#2c2c2c;">5</span>
<div style="left:324.60px;top:1096.900px;width:65.900px;height:59px;border-radius:4px 4px 0 0;background:linear-gradient(#a6a6a6 0,#8e8e8e 3px,#7e7e7e 50%,#5e5e5e 100%)"></div>
<div style="left:329.40px;top:1102.000px;width:56.400px;height:33.600px;border-radius:3.500px;background:#1a1a1a;box-shadow:inset 0 1px 2px rgba(0,0,0,.38),0 0 0 0.600px rgba(0,0,0,.16)"></div>
<span class="t" style="left:352.32px;top:1141.20px;font-size:9.6px;line-height:12px;letter-spacing:-0.160px;font-weight:bold;color:#2c2c2c;">10</span>
<div style="left:392.55px;top:1096.900px;width:65.900px;height:59px;border-radius:4px 4px 0 0;background:linear-gradient(#a6a6a6 0,#8e8e8e 3px,#7e7e7e 50%,#5e5e5e 100%)"></div>
<div style="left:397.35px;top:1102.000px;width:56.400px;height:33.600px;border-radius:3.500px;background:#282828;box-shadow:inset 0 1px 2px rgba(0,0,0,.38),0 0 0 0.600px rgba(0,0,0,.16)"></div>
<span class="t" style="left:420.27px;top:1141.20px;font-size:9.6px;line-height:12px;letter-spacing:-0.160px;font-weight:bold;color:#2c2c2c;">15</span>
<div style="left:460.50px;top:1096.900px;width:65.900px;height:59px;border-radius:4px 4px 0 0;background:linear-gradient(#a6a6a6 0,#8e8e8e 3px,#7e7e7e 50%,#5e5e5e 100%)"></div>
<div style="left:465.30px;top:1102.000px;width:56.400px;height:33.600px;border-radius:3.500px;background:#363636;box-shadow:inset 0 1px 2px rgba(0,0,0,.38),0 0 0 0.600px rgba(0,0,0,.16)"></div>
<span class="t" style="left:488.22px;top:1141.20px;font-size:9.6px;line-height:12px;letter-spacing:-0.160px;font-weight:bold;color:#2c2c2c;">20</span>
<div style="left:528.45px;top:1096.900px;width:65.900px;height:59px;border-radius:4px 4px 0 0;background:linear-gradient(#a6a6a6 0,#8e8e8e 3px,#7e7e7e 50%,#5e5e5e 100%)"></div>
<div style="left:533.25px;top:1102.000px;width:56.400px;height:33.600px;border-radius:3.500px;background:#444444;box-shadow:inset 0 1px 2px rgba(0,0,0,.38),0 0 0 0.600px rgba(0,0,0,.16)"></div>
<span class="t" style="left:556.17px;top:1141.20px;font-size:9.6px;line-height:12px;letter-spacing:-0.160px;font-weight:bold;color:#2c2c2c;">25</span>
<div style="left:596.40px;top:1096.900px;width:65.900px;height:59px;border-radius:4px 4px 0 0;background:linear-gradient(#a6a6a6 0,#8e8e8e 3px,#7e7e7e 50%,#5e5e5e 100%)"></div>
<div style="left:601.20px;top:1102.000px;width:56.400px;height:33.600px;border-radius:3.500px;background:#515151;box-shadow:inset 0 1px 2px rgba(0,0,0,.38),0 0 0 0.600px rgba(0,0,0,.16)"></div>
<span class="t" style="left:624.12px;top:1141.20px;font-size:9.6px;line-height:12px;letter-spacing:-0.160px;font-weight:bold;color:#2c2c2c;">30</span>
<div style="left:664.35px;top:1096.900px;width:65.900px;height:59px;border-radius:4px 4px 0 0;background:linear-gradient(#a6a6a6 0,#8e8e8e 3px,#7e7e7e 50%,#5e5e5e 100%)"></div>
<div style="left:669.15px;top:1102.000px;width:56.400px;height:33.600px;border-radius:3.500px;background:#5e5e5e;box-shadow:inset 0 1px 2px rgba(0,0,0,.38),0 0 0 0.600px rgba(0,0,0,.16)"></div>
<span class="t" style="left:692.07px;top:1141.20px;font-size:9.6px;line-height:12px;letter-spacing:-0.160px;font-weight:bold;color:#2c2c2c;">35</span>
<div style="left:732.30px;top:1096.900px;width:65.900px;height:59px;border-radius:4px 4px 0 0;background:linear-gradient(#a6a6a6 0,#8e8e8e 3px,#7e7e7e 50%,#5e5e5e 100%)"></div>
<div style="left:737.10px;top:1102.000px;width:56.400px;height:33.600px;border-radius:3.500px;background:#6b6b6b;box-shadow:inset 0 1px 2px rgba(0,0,0,.38),0 0 0 0.600px rgba(0,0,0,.16)"></div>
<span class="t" style="left:760.02px;top:1141.20px;font-size:9.6px;line-height:12px;letter-spacing:-0.160px;font-weight:bold;color:#2c2c2c;">40</span>
<div style="left:800.25px;top:1096.900px;width:65.900px;height:59px;border-radius:4px 4px 0 0;background:linear-gradient(#a6a6a6 0,#8e8e8e 3px,#7e7e7e 50%,#5e5e5e 100%)"></div>
<div style="left:805.05px;top:1102.000px;width:56.400px;height:33.600px;border-radius:3.500px;background:#787878;box-shadow:inset 0 1px 2px rgba(0,0,0,.38),0 0 0 0.600px rgba(0,0,0,.16)"></div>
<span class="t" style="left:827.97px;top:1141.20px;font-size:9.6px;line-height:12px;letter-spacing:-0.160px;font-weight:bold;color:#2c2c2c;">45</span>
<div style="left:868.20px;top:1096.900px;width:65.900px;height:59px;border-radius:4px 4px 0 0;background:linear-gradient(#a6a6a6 0,#8e8e8e 3px,#7e7e7e 50%,#5e5e5e 100%)"></div>
<div style="left:873.00px;top:1102.000px;width:56.400px;height:33.600px;border-radius:3.500px;background:#858585;box-shadow:inset 0 1px 2px rgba(0,0,0,.38),0 0 0 0.600px rgba(0,0,0,.16)"></div>
<span class="t" style="left:895.92px;top:1141.20px;font-size:9.6px;line-height:12px;letter-spacing:-0.160px;font-weight:bold;color:#2c2c2c;">50</span>
<div style="left:936.15px;top:1096.900px;width:65.900px;height:59px;border-radius:4px 4px 0 0;background:linear-gradient(#a6a6a6 0,#8e8e8e 3px,#7e7e7e 50%,#5e5e5e 100%)"></div>
<div style="left:940.95px;top:1102.000px;width:56.400px;height:33.600px;border-radius:3.500px;background:#919191;box-shadow:inset 0 1px 2px rgba(0,0,0,.38),0 0 0 0.600px rgba(0,0,0,.16)"></div>
<span class="t" style="left:963.87px;top:1141.20px;font-size:9.6px;line-height:12px;letter-spacing:-0.160px;font-weight:bold;color:#2c2c2c;">55</span>
<div style="left:1004.10px;top:1096.900px;width:65.900px;height:59px;border-radius:4px 4px 0 0;background:linear-gradient(#a6a6a6 0,#8e8e8e 3px,#7e7e7e 50%,#5e5e5e 100%)"></div>
<div style="left:1008.90px;top:1102.000px;width:56.400px;height:33.600px;border-radius:3.500px;background:#9e9e9e;box-shadow:inset 0 1px 2px rgba(0,0,0,.38),0 0 0 0.600px rgba(0,0,0,.16)"></div>
<span class="t" style="left:1031.82px;top:1141.20px;font-size:9.6px;line-height:12px;letter-spacing:-0.160px;font-weight:bold;color:#2c2c2c;">60</span>
<div style="left:1072.05px;top:1096.900px;width:65.900px;height:59px;border-radius:4px 4px 0 0;background:linear-gradient(#a6a6a6 0,#8e8e8e 3px,#7e7e7e 50%,#5e5e5e 100%)"></div>
<div style="left:1076.85px;top:1102.000px;width:56.400px;height:33.600px;border-radius:3.500px;background:#ababab;box-shadow:inset 0 1px 2px rgba(0,0,0,.38),0 0 0 0.600px rgba(0,0,0,.16)"></div>
<span class="t" style="left:1099.77px;top:1141.20px;font-size:9.6px;line-height:12px;letter-spacing:-0.160px;font-weight:bold;color:#2c2c2c;">65</span>
<div style="left:1140.00px;top:1096.900px;width:65.900px;height:59px;border-radius:4px 4px 0 0;background:linear-gradient(#a6a6a6 0,#8e8e8e 3px,#7e7e7e 50%,#5e5e5e 100%)"></div>
<div style="left:1144.80px;top:1102.000px;width:56.400px;height:33.600px;border-radius:3.500px;background:#b7b7b7;box-shadow:inset 0 1px 2px rgba(0,0,0,.38),0 0 0 0.600px rgba(0,0,0,.16)"></div>
<span class="t" style="left:1167.72px;top:1141.20px;font-size:9.6px;line-height:12px;letter-spacing:-0.160px;font-weight:bold;color:#2c2c2c;">70</span>
<div style="left:1207.95px;top:1096.900px;width:65.900px;height:59px;border-radius:4px 4px 0 0;background:linear-gradient(#a6a6a6 0,#8e8e8e 3px,#7e7e7e 50%,#5e5e5e 100%)"></div>
<div style="left:1212.75px;top:1102.000px;width:56.400px;height:33.600px;border-radius:3.500px;background:#c3c3c3;box-shadow:inset 0 1px 2px rgba(0,0,0,.38),0 0 0 0.600px rgba(0,0,0,.16)"></div>
<span class="t" style="left:1235.67px;top:1141.20px;font-size:9.6px;line-height:12px;letter-spacing:-0.160px;font-weight:bold;color:#2c2c2c;">75</span>
<div style="left:1275.90px;top:1096.900px;width:65.900px;height:59px;border-radius:4px 4px 0 0;background:linear-gradient(#a6a6a6 0,#8e8e8e 3px,#7e7e7e 50%,#5e5e5e 100%)"></div>
<div style="left:1280.70px;top:1102.000px;width:56.400px;height:33.600px;border-radius:3.500px;background:#cfcfcf;box-shadow:inset 0 1px 2px rgba(0,0,0,.38),0 0 0 0.600px rgba(0,0,0,.16)"></div>
<span class="t" style="left:1303.62px;top:1141.20px;font-size:9.6px;line-height:12px;letter-spacing:-0.160px;font-weight:bold;color:#2c2c2c;">80</span>
<div style="left:1343.85px;top:1096.900px;width:65.900px;height:59px;border-radius:4px 4px 0 0;background:linear-gradient(#a6a6a6 0,#8e8e8e 3px,#7e7e7e 50%,#5e5e5e 100%)"></div>
<div style="left:1348.65px;top:1102.000px;width:56.400px;height:33.600px;border-radius:3.500px;background:#dbdbdb;box-shadow:inset 0 1px 2px rgba(0,0,0,.38),0 0 0 0.600px rgba(0,0,0,.16)"></div>
<span class="t" style="left:1371.57px;top:1141.20px;font-size:9.6px;line-height:12px;letter-spacing:-0.160px;font-weight:bold;color:#2c2c2c;">85</span>
<div style="left:1411.80px;top:1096.900px;width:65.900px;height:59px;border-radius:4px 4px 0 0;background:linear-gradient(#a6a6a6 0,#8e8e8e 3px,#7e7e7e 50%,#5e5e5e 100%)"></div>
<div style="left:1416.60px;top:1102.000px;width:56.400px;height:33.600px;border-radius:3.500px;background:#e6e6e6;box-shadow:inset 0 1px 2px rgba(0,0,0,.38),0 0 0 0.600px rgba(0,0,0,.16)"></div>
<span class="t" style="left:1439.52px;top:1141.20px;font-size:9.6px;line-height:12px;letter-spacing:-0.160px;font-weight:bold;color:#2c2c2c;">90</span>
<div style="left:1479.75px;top:1096.900px;width:65.900px;height:59px;border-radius:4px 4px 0 0;background:linear-gradient(#a6a6a6 0,#8e8e8e 3px,#7e7e7e 50%,#5e5e5e 100%)"></div>
<div style="left:1484.55px;top:1102.000px;width:56.400px;height:33.600px;border-radius:3.500px;background:#f2f2f2;box-shadow:inset 0 1px 2px rgba(0,0,0,.38),0 0 0 0.600px rgba(0,0,0,.16)"></div>
<span class="t" style="left:1507.47px;top:1141.20px;font-size:9.6px;line-height:12px;letter-spacing:-0.160px;font-weight:bold;color:#2c2c2c;">95</span>
<div style="left:1547.90px;top:1096.500px;width:66.600px;height:59px;border-radius:5px 5px 0 0;background:linear-gradient(#1c1c1c,#282828)"></div>
<div style="left:1553.50px;top:1102.000px;width:56.400px;height:33.600px;border-radius:3.500px;background:#ffffff;box-shadow:inset 0 1px 2px rgba(0,0,0,.38),0 0 0 0.600px rgba(0,0,0,.16)"></div>
<span class="t" style="left:1561.70px;top:1138.700px;width:40px;text-align:center;font-family:'Liberation Serif',serif;font-weight:bold;font-size:11.500px;line-height:14px;color:#fff">100</span>
<div style="left:1617.300px;top:1096.800px;width:44.700px;height:16.600px;border-radius:4px 4px 0 0;background:linear-gradient(#b0b0b0,#8e8e8e)"></div>
<div style="left:1633px;top:1098.800px;width:13.400px;height:13.400px;border-radius:50%;background:linear-gradient(#6a6a6a,#9a9a9a)"></div>
<svg class="abs" style="left:1635.200px;top:1102.200px" width="9" height="6"><path d="M0 5.500h9l-4.500-5z" fill="#2a2a2a"/></svg>
<div style="left:1617.300px;top:1115px;width:44.700px;height:40px;background:linear-gradient(#a4a4a4,#808080 60%,#6c6c6c)"></div>
<div style="left:1625.300px;top:1120.400px;width:28.300px;height:27.800px;box-sizing:border-box;border:2px solid #1a1a1a;border-radius:4.500px;background:linear-gradient(#b8b8b8 0,#a8a8a8 49%,#888 51%,#8c8c8c 100%)"></div>
<div style="left:1633.600px;top:1128.300px;width:12.300px;height:12.200px;background:linear-gradient(#262626 0,#1c1c1c 48%,#000 52%)"></div>
<div style="left:1663.30px;top:1096.300px;width:43.10px;height:28.300px;border-radius:3px 0 0 0;background:linear-gradient(#b0b0b0 0,#a0a0a0 2px,#8c8c8c 50%,#6c6c6c 100%)"></div>
<div style="left:1675.10px;top:1101.50px;width:19px;height:19px;border-radius:50%;background:linear-gradient(#6a6a6a,#9a9a9a)"></div>
<svg class="abs" style="left:1677.60px;top:1104.00px" width="14" height="14" viewBox="-7 -7 14 14" fill="none" stroke="#2a2a2a" stroke-width="1.600"><rect x="-3.600" y="-3.600" width="7.200" height="7.200" fill="#2a2a2a" stroke="none" rx="0.800"/></svg>
<div style="left:1706.90px;top:1096.300px;width:41.50px;height:28.300px;border-radius:0;background:linear-gradient(#b0b0b0 0,#a0a0a0 2px,#8c8c8c 50%,#6c6c6c 100%)"></div>
<div style="left:1718.10px;top:1101.50px;width:19px;height:19px;border-radius:50%;background:linear-gradient(#6a6a6a,#9a9a9a)"></div>
<svg class="abs" style="left:1720.60px;top:1104.00px" width="14" height="14" viewBox="-7 -7 14 14" fill="none" stroke="#2a2a2a" stroke-width="1.600"><path d="M-2.800 -4.600v9.200l7.400-4.600z" fill="#2a2a2a" stroke="none"/></svg>
<div style="left:1748.90px;top:1096.300px;width:41.20px;height:28.300px;border-radius:0;background:linear-gradient(#b0b0b0 0,#a0a0a0 2px,#8c8c8c 50%,#6c6c6c 100%)"></div>
<div style="left:1760.50px;top:1101.50px;width:19px;height:19px;border-radius:50%;background:linear-gradient(#6a6a6a,#9a9a9a)"></div>
<svg class="abs" style="left:1763.00px;top:1104.00px" width="14" height="14" viewBox="-7 -7 14 14" fill="none" stroke="#2a2a2a" stroke-width="1.600"><path d="M-3.300 -4.600h-1.800v9.200h1.800M3.300 -4.600h1.800v9.200h-1.800" stroke-width="1.700"/><path d="M-2.600 0.200h5.200" stroke-width="1.500" stroke-dasharray="1.400 0.500"/></svg>
<div style="left:1792.20px;top:1096.300px;width:41.20px;height:28.300px;border-radius:0;background:linear-gradient(#b0b0b0 0,#a0a0a0 2px,#8c8c8c 50%,#6c6c6c 100%)"></div>
<div style="left:1802.70px;top:1101.50px;width:19px;height:19px;border-radius:50%;background:linear-gradient(#6a6a6a,#9a9a9a)"></div>
<svg class="abs" style="left:1805.20px;top:1104.00px" width="14" height="14" viewBox="-7 -7 14 14" fill="none" stroke="#2a2a2a" stroke-width="1.600"><path d="M0 0c-1.400-2-2.300-2.500-3.300-2.500a2.500 2.500 0 0 0 0 5c1 0 1.900-0.500 3.300-2.500c1.400-2 2.300-2.500 3.300-2.500a2.500 2.500 0 0 1 0 5c-1 0-1.900-0.500-3.300-2.500z" stroke-width="1.600"/></svg>
<div style="left:1834.00px;top:1096.300px;width:41.00px;height:28.300px;border-radius:0;background:linear-gradient(#b0b0b0 0,#a0a0a0 2px,#8c8c8c 50%,#6c6c6c 100%)"></div>
<div style="left:1844.90px;top:1101.50px;width:19px;height:19px;border-radius:50%;background:linear-gradient(#6a6a6a,#9a9a9a)"></div>
<svg class="abs" style="left:1847.40px;top:1104.00px" width="14" height="14" viewBox="-7 -7 14 14" fill="none" stroke="#2a2a2a" stroke-width="1.600"><path d="M3.900 -1.300a4.100 4.100 0 0 0-7.400-1.600M-3.900 1.300a4.100 4.100 0 0 0 7.400 1.600" stroke-width="2"/><path d="M-5.600 -5v3.900h3.900zM5.600 5v-3.900h-3.900z" fill="#2a2a2a" stroke="none"/></svg>
<div style="left:1875.500px;top:1096.300px;width:44.500px;height:28.300px;background:linear-gradient(#3a3a3a,#2e2e2e)"></div>
<div style="left:1888.200px;top:1101.300px;width:18.800px;height:18.800px;border-radius:50%;background:linear-gradient(#2a2a2a,#383838)"></div>
<div style="left:1917px;top:1124.500px;width:3px;height:31px;background:#2a2a2a"></div>
<div style="left:1663.300px;top:1125.800px;width:126.800px;height:29.200px;border-radius:3px 0 0 0;background:linear-gradient(#b0b0b0 0,#a0a0a0 2px,#8c8c8c 50%,#6c6c6c 100%)"></div>
<div style="left:1792.200px;top:1125.800px;width:124.800px;height:29.200px;border-radius:0 3px 0 0;background:linear-gradient(#b0b0b0 0,#a0a0a0 2px,#8c8c8c 50%,#6c6c6c 100%)"></div>
<div style="left:1682.500px;top:1130.500px;width:19px;height:19px;border-radius:50%;background:linear-gradient(#6a6a6a,#9a9a9a)"></div>
<div style="left:1882.500px;top:1130.500px;width:19px;height:19px;border-radius:50%;background:linear-gradient(#6a6a6a,#9a9a9a)"></div>
<svg class="abs" style="left:1686.500px;top:1135px" width="12" height="10" fill="none" stroke="#333" stroke-width="2"><path d="M5 0.800l-3.600 4.200l3.600 4.200M10 0.800l-3.600 4.200l3.600 4.200"/></svg>
<svg class="abs" style="left:1886px;top:1135px" width="12" height="10" fill="none" stroke="#333" stroke-width="2"><path d="M1.500 0.800l3.600 4.200l-3.600 4.200M6.500 0.800l3.600 4.200l-3.600 4.200"/></svg>
<span class="t" style="left:1717.40px;top:1128.50px;font-size:20px;line-height:24px;letter-spacing:-0.202px;font-weight:bold;color:#2b2b2b;">Back</span>
<span class="t" style="left:1817.60px;top:1128.50px;font-size:20px;line-height:24px;letter-spacing:1.163px;font-weight:bold;color:#2b2b2b;">Next</span>
<svg class="abs" style="left:1896px;top:1058px" width="24" height="52" viewBox="1896 1058 24 52"><defs><linearGradient id="tvg" x1="0" x2="1" y1="0" y2="0"><stop offset="0" stop-color="#0e8ee9"/><stop offset="1" stop-color="#1cb2f6"/></linearGradient></defs><path d="M1900 1058.800H1920V1108.700L1900.300 1097.100Q1896.900 1095.200 1896.900 1092.300V1061.900Q1896.900 1058.800 1900 1058.800z" fill="#fdfdfd"/><rect x="1899.900" y="1064.100" width="19.300" height="18.700" fill="url(#tvg)"/><circle cx="1909.600" cy="1073.500" r="8.200" fill="#fff"/><path d="M1902.600 1073.500l3.600-2.900v1.900h6.800v-1.900l3.600 2.900l-3.600 2.900v-1.900h-6.800v1.900z" fill="#1a8ee8"/></svg>
</div></body></html>
